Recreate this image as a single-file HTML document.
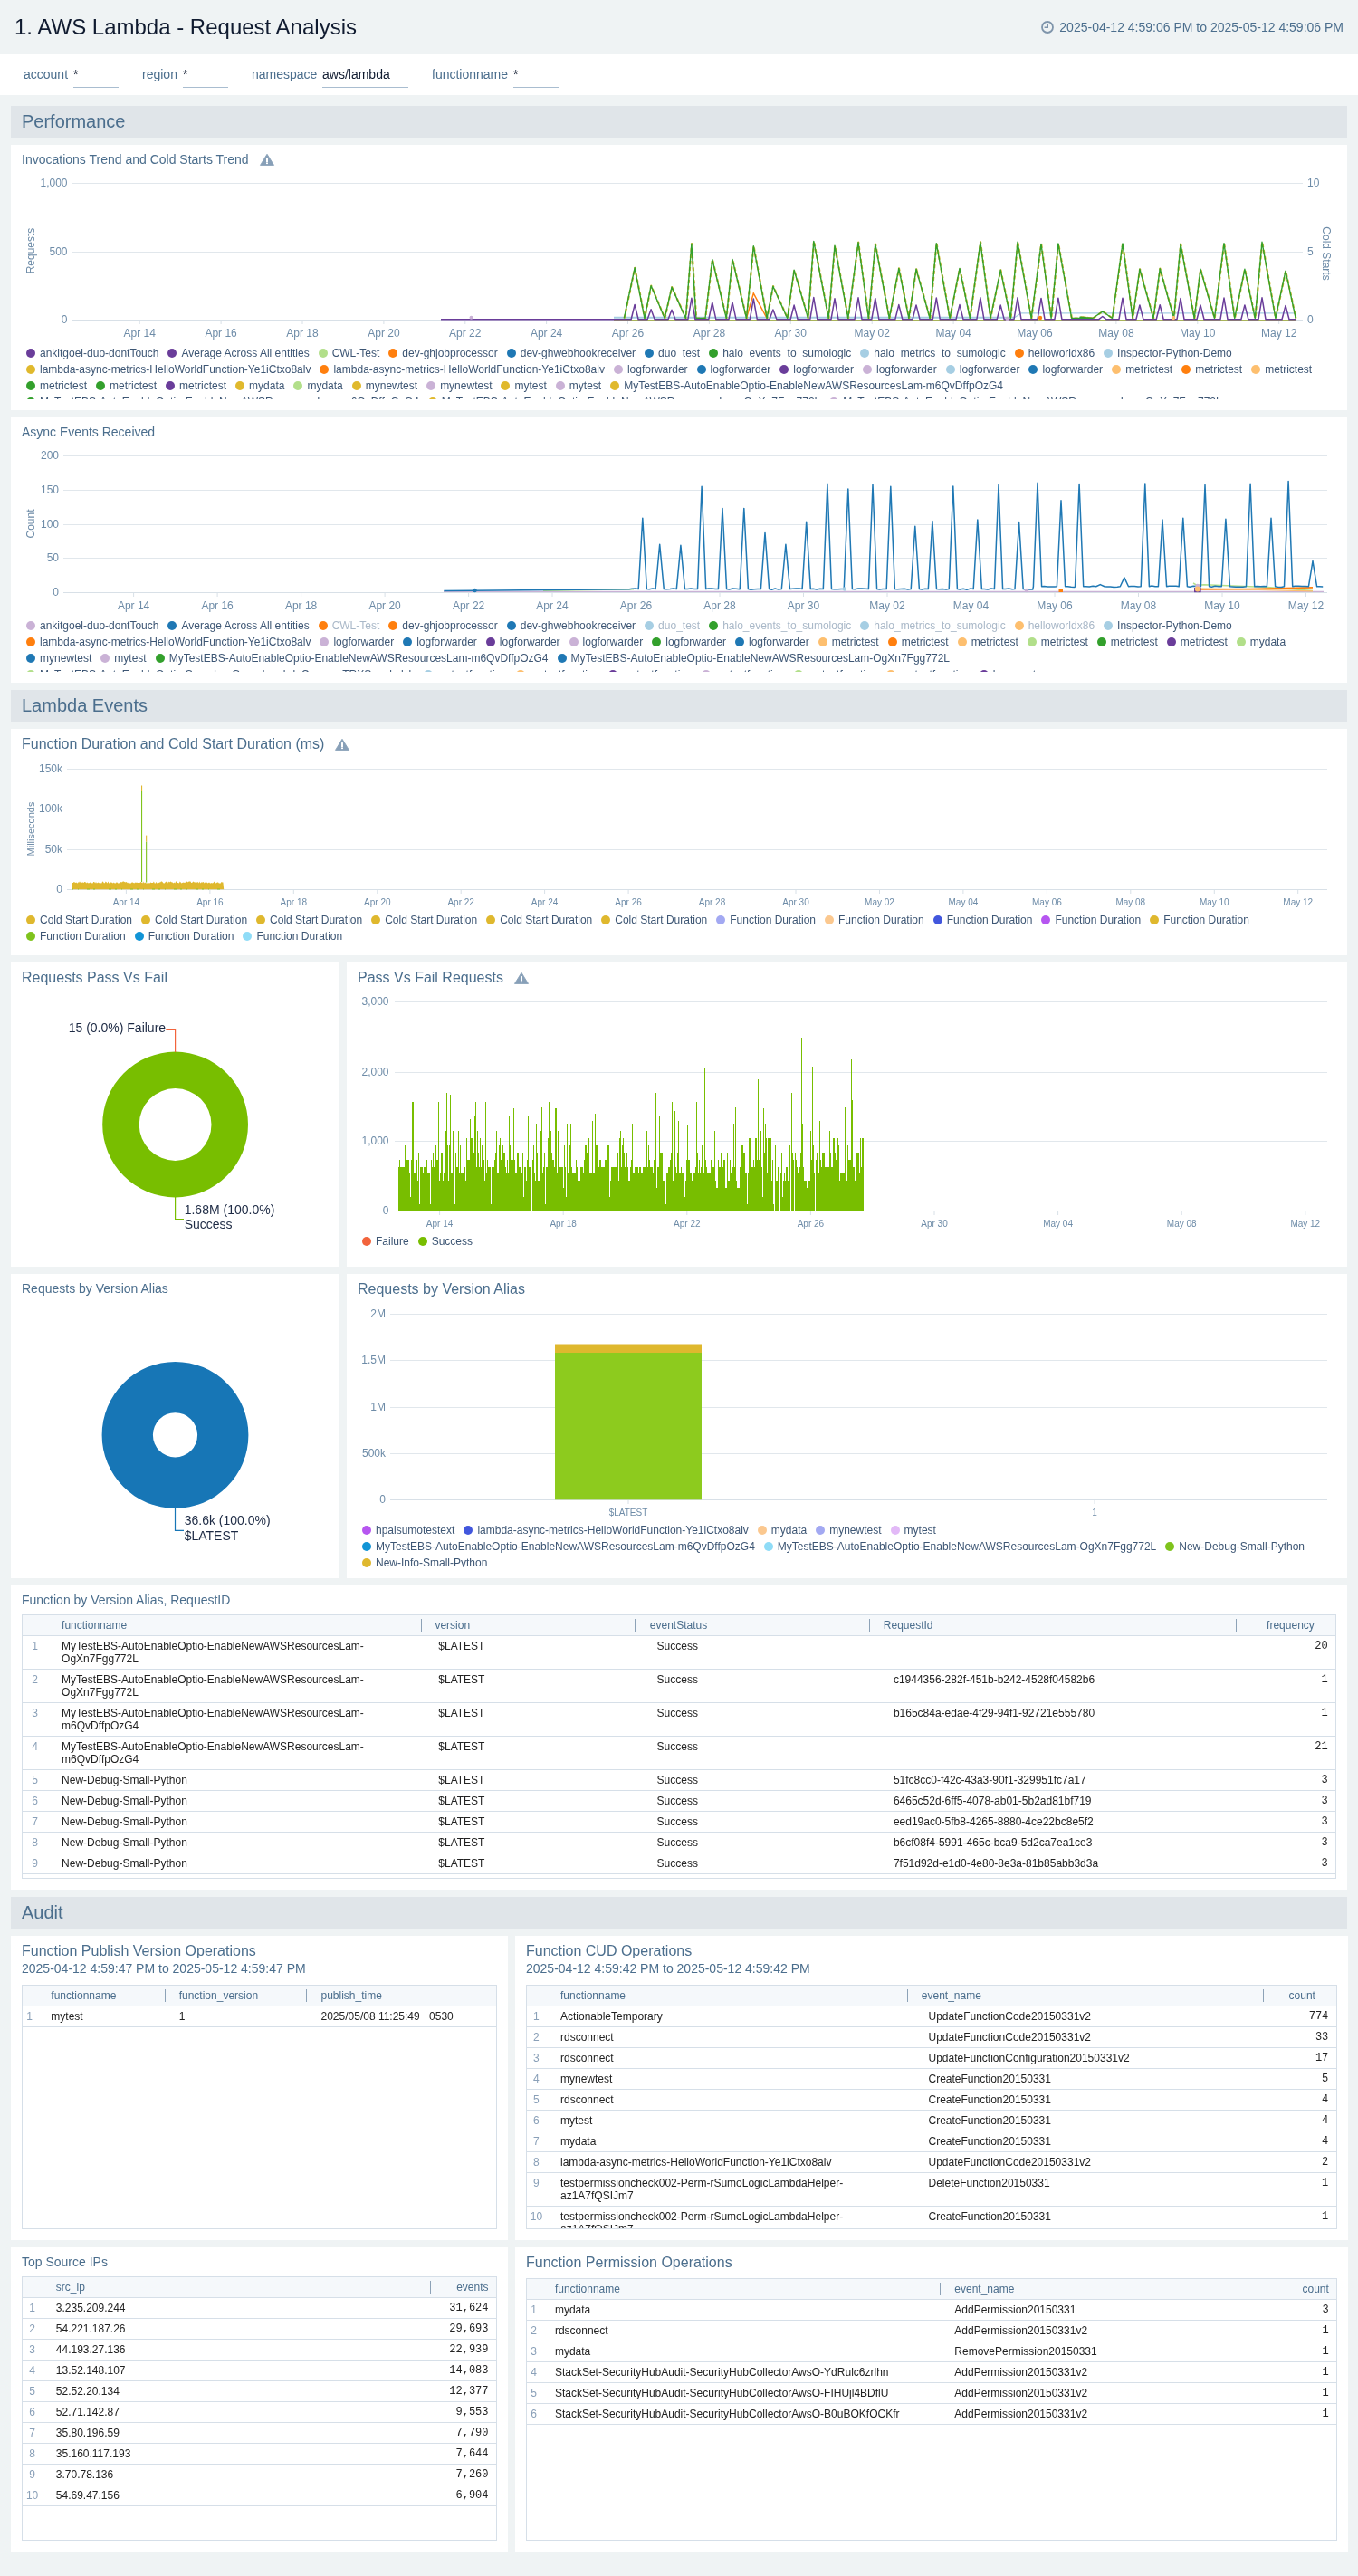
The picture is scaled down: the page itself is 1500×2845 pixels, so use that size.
<!DOCTYPE html>
<html><head><meta charset="utf-8"><title>1. AWS Lambda - Request Analysis</title>
<style>
*{box-sizing:border-box}
html,body{margin:0;padding:0}
body{width:1500px;height:2845px;background:#eff3f4;font-family:"Liberation Sans",Arial,sans-serif;position:relative;overflow:hidden;color:#1d2a3a}
.abs{position:absolute}
.hdr{position:absolute;left:0;top:0;width:1500px;height:60px;background:#eff3f4}
.hdr h1{position:absolute;left:16px;top:16px;margin:0;font-size:24px;line-height:28px;font-weight:400;color:#101b30;white-space:nowrap}
.hdr .rng{position:absolute;right:16px;top:22px;font-size:14px;line-height:16px;color:#4b6e8d;white-space:nowrap}
.flt{position:absolute;left:0;top:60px;width:1500px;height:45px;background:#fff}
.flt .l{position:absolute;top:14px;font-size:14px;line-height:16px;color:#4b6e8d;white-space:nowrap}
.flt .v{position:absolute;top:14px;height:23px;border-bottom:1px solid #a9bdd0;font-size:14px;line-height:16px;color:#101b30;white-space:nowrap}
.sec{position:absolute;left:12px;width:1476px;height:35px;background:#e0e5e9;color:#4b6e8d;font-size:20px;line-height:35px;padding-left:12px;white-space:nowrap}
.pn{position:absolute;background:#fff;overflow:hidden}
.pt{position:absolute;left:12px;white-space:nowrap;color:#4b6e8d}
.pt14{font-size:14px;line-height:16px;top:8px}
.pt16{font-size:16px;line-height:18px;top:8px}
.lg{position:absolute;overflow:hidden;font-size:12px;line-height:18px;color:#3d5674}
.lg .r{white-space:nowrap;height:18px}
.lg .i{display:inline-block;margin-right:10px}
.lg .i.f{color:#a9b8c8}
.lg .d{display:inline-block;width:10px;height:10px;border-radius:50%;margin-right:5px;vertical-align:-1px}
svg{position:absolute;left:0;top:0;overflow:visible}
svg text{font-family:"Liberation Sans",Arial,sans-serif}
table{border-collapse:collapse}
</style></head><body>
<div id="root" style="position:absolute;left:0;top:0;width:1500px;height:2845px;will-change:transform">
<div class="hdr"><h1>1. AWS Lambda - Request Analysis</h1><svg width="14" height="14" viewBox="0 0 14 14" style="position:absolute;left:1150px;top:23px"><circle cx="7" cy="7" r="6" fill="none" stroke="#7f95ab" stroke-width="1.8"/><path d="M7.3 3.2 V7.3 H3.6" fill="none" stroke="#7f95ab" stroke-width="1.4"/></svg><div class="rng">2025-04-12 4:59:06 PM to 2025-05-12 4:59:06 PM</div></div>
<div class="flt"><div class="l" style="left:26px">account</div><div class="v" style="left:81px;width:50px">*</div><div class="l" style="left:157px">region</div><div class="v" style="left:202px;width:50px">*</div><div class="l" style="left:278px">namespace</div><div class="v" style="left:356px;width:95px">aws/lambda</div><div class="l" style="left:477px">functionname</div><div class="v" style="left:567px;width:50px">*</div></div>
<div class="sec" style="top:117px">Performance</div>
<div class="sec" style="top:762px">Lambda Events</div>
<div class="sec" style="top:2095px">Audit</div>
<div class="pn" style="left:12px;top:160px;width:1476px;height:293px"><div class="pt pt14">Invocations Trend and Cold Starts Trend</div><svg width="16" height="14" viewBox="0 0 16 14" style="position:absolute;left:275px;top:9px"><path d="M8 1.3 L15.5 13.4 L0.5 13.4 Z" fill="#88a0b8" stroke="#88a0b8" stroke-width="0.9" stroke-linejoin="round"/><rect x="7" y="5.1" width="2" height="4.9" fill="#fff"/><rect x="7" y="10.5" width="2" height="1.6" fill="#fff"/></svg><svg width="1476" height="293" viewBox="0 0 1476 293"><path d="M68 42.5 H1427" stroke="#e1e7ec" stroke-width="1" fill="none" shape-rendering="crispEdges"/><text x="62.5" y="45.8" font-size="12" fill="#6e8ca8" text-anchor="end" >1,000</text><text x="1432" y="45.8" font-size="12" fill="#6e8ca8" text-anchor="start" >10</text><path d="M68 118.5 H1427" stroke="#e1e7ec" stroke-width="1" fill="none" shape-rendering="crispEdges"/><text x="62.5" y="121.8" font-size="12" fill="#6e8ca8" text-anchor="end" >500</text><text x="1432" y="121.8" font-size="12" fill="#6e8ca8" text-anchor="start" >5</text><path d="M68 193.5 H1427" stroke="#d8e0e7" stroke-width="1" fill="none" shape-rendering="crispEdges"/><text x="62.5" y="196.8" font-size="12" fill="#6e8ca8" text-anchor="end" >0</text><text x="1432" y="196.8" font-size="12" fill="#6e8ca8" text-anchor="start" >0</text><path d="M142.2 194 v4" stroke="#d8e0e7" stroke-width="1" fill="none"/><path d="M232.1 194 v4" stroke="#d8e0e7" stroke-width="1" fill="none"/><path d="M322.0 194 v4" stroke="#d8e0e7" stroke-width="1" fill="none"/><path d="M411.9 194 v4" stroke="#d8e0e7" stroke-width="1" fill="none"/><path d="M501.8 194 v4" stroke="#d8e0e7" stroke-width="1" fill="none"/><path d="M591.6 194 v4" stroke="#d8e0e7" stroke-width="1" fill="none"/><path d="M681.5 194 v4" stroke="#d8e0e7" stroke-width="1" fill="none"/><path d="M771.4 194 v4" stroke="#d8e0e7" stroke-width="1" fill="none"/><path d="M861.3 194 v4" stroke="#d8e0e7" stroke-width="1" fill="none"/><path d="M951.2 194 v4" stroke="#d8e0e7" stroke-width="1" fill="none"/><path d="M1041.1 194 v4" stroke="#d8e0e7" stroke-width="1" fill="none"/><path d="M1131.0 194 v4" stroke="#d8e0e7" stroke-width="1" fill="none"/><path d="M1220.9 194 v4" stroke="#d8e0e7" stroke-width="1" fill="none"/><path d="M1310.8 194 v4" stroke="#d8e0e7" stroke-width="1" fill="none"/><path d="M1400.7 194 v4" stroke="#d8e0e7" stroke-width="1" fill="none"/><text x="142.2" y="212.3" font-size="12" fill="#6e8ca8" text-anchor="middle" >Apr 14</text><text x="232.1" y="212.3" font-size="12" fill="#6e8ca8" text-anchor="middle" >Apr 16</text><text x="322.0" y="212.3" font-size="12" fill="#6e8ca8" text-anchor="middle" >Apr 18</text><text x="411.9" y="212.3" font-size="12" fill="#6e8ca8" text-anchor="middle" >Apr 20</text><text x="501.8" y="212.3" font-size="12" fill="#6e8ca8" text-anchor="middle" >Apr 22</text><text x="591.6" y="212.3" font-size="12" fill="#6e8ca8" text-anchor="middle" >Apr 24</text><text x="681.5" y="212.3" font-size="12" fill="#6e8ca8" text-anchor="middle" >Apr 26</text><text x="771.4" y="212.3" font-size="12" fill="#6e8ca8" text-anchor="middle" >Apr 28</text><text x="861.3" y="212.3" font-size="12" fill="#6e8ca8" text-anchor="middle" >Apr 30</text><text x="951.2" y="212.3" font-size="12" fill="#6e8ca8" text-anchor="middle" >May 02</text><text x="1041.1" y="212.3" font-size="12" fill="#6e8ca8" text-anchor="middle" >May 04</text><text x="1131.0" y="212.3" font-size="12" fill="#6e8ca8" text-anchor="middle" >May 06</text><text x="1220.9" y="212.3" font-size="12" fill="#6e8ca8" text-anchor="middle" >May 08</text><text x="1310.8" y="212.3" font-size="12" fill="#6e8ca8" text-anchor="middle" >May 10</text><text x="1400.7" y="212.3" font-size="12" fill="#6e8ca8" text-anchor="middle" >May 12</text><text transform="translate(26,117) rotate(-90)" font-size="12" fill="#6e8ca8" text-anchor="middle">Requests</text><text transform="translate(1449,120) rotate(90)" font-size="12" fill="#6e8ca8" text-anchor="middle">Cold Starts</text><polyline points="1109,190.6 1116,185.8 1419,185.8" fill="none" stroke="#a6cee3" stroke-width="1.2"/><polyline points="666,190.8 1108,190.8" fill="none" stroke="#a6cee3" stroke-width="2"/><polyline points="666,193.7 1419,193.7" fill="none" stroke="#a9b45a" stroke-width="1.2"/><polyline points="812.5,191.5 820.3,163.9 835.1,191.5" fill="none" stroke="#ff7f0e" stroke-width="1.5"/><polyline points="677.6,191.5 689.3,135.8 700.2,191.5 707.3,155.6 722.4,191.5 730.2,157.1 745.6,191.5 752.1,109.2 757.1,191.5 767.2,191.5 775.0,126.5 790.5,191.5 797.2,126.5 812.7,191.5 820.5,111.7 835.3,191.5 842.1,156.2 857.9,191.5 865.3,138.3 880.8,191.5 887.0,106.4 903.4,191.5 910.2,111.3 925.0,191.5 936.2,107.6 947.6,191.5 955.0,109.5 970.5,191.5 981.0,136.4 992.1,191.5 1000.2,137.3 1015.3,191.5 1022.5,108.6 1037.3,191.5 1048.2,136.4 1059.6,191.5 1071.1,107.3 1082.2,191.5 1093.4,138.3 1104.5,191.5 1112.2,107.3 1127.4,191.5 1138.2,109.5 1149.3,191.5 1157.1,108.9 1171.9,191.5 1195.2,191.5 1181.2,190.2 1195.2,191.5 1206.0,184 1216.8,191.5 1228.2,108.9 1239.3,191.5 1247.1,137.3 1262.2,191.5 1269.4,136.7 1284.8,191.5 1292.2,109.5 1307.4,191.5 1314.2,137.3 1329.7,191.5 1340.2,108.6 1351.9,191.5 1363.1,137.3 1374.5,191.5 1382.2,107.3 1397.1,191.5 1408.2,139.2 1419.4,191.5" fill="none" stroke="#d2b830" stroke-width="2.2" stroke-dasharray="4 3" stroke-linejoin="round"/><polyline points="677.4,191.5 689.1,135.8 700,191.5 707.1,155.6 722.2,191.5 730,157.1 745.4,191.5 751.9,109.2 756.9,191.5 767,191.5 774.8,126.5 790.3,191.5 797,126.5 812.5,191.5 820.3,111.7 835.1,191.5 841.9,156.2 857.7,191.5 865.1,138.3 880.6,191.5 886.8,106.4 903.2,191.5 910,111.3 924.8,191.5 936,107.6 947.4,191.5 954.8,109.5 970.3,191.5 980.8,136.4 991.9,191.5 1000,137.3 1015.1,191.5 1022.3,108.6 1037.1,191.5 1048,136.4 1059.4,191.5 1070.9,107.3 1082,191.5 1093.2,138.3 1104.3,191.5 1112,107.3 1127.2,191.5 1138,109.5 1149.1,191.5 1156.9,108.9 1171.7,191.5 1195,191.5 1181,190.2 1195,191.5 1205.8,184 1216.6,191.5 1228,108.9 1239.1,191.5 1246.9,137.3 1262,191.5 1269.2,136.7 1284.6,191.5 1292,109.5 1307.2,191.5 1314,137.3 1329.5,191.5 1340,108.6 1351.7,191.5 1362.9,137.3 1374.3,191.5 1382,107.3 1396.9,191.5 1408,139.2 1419.2,191.5" fill="none" stroke="#33a02c" stroke-width="1.4" stroke-linejoin="round"/><polyline points="475,192.7 685.1,192.7 689.1,176.5 693.1,192.7 703.1,192.7 707.1,181.8 711.1,192.7 726.0,192.7 730,182.2 734.0,192.7 747.9,192.7 751.9,169.3 755.9,192.7 770.8,192.7 774.8,173.9 778.8,192.7 793.0,192.7 797,173.9 801.0,192.7 816.3,192.7 820.3,170.0 824.3,192.7 837.9,192.7 841.9,182.0 845.9,192.7 861.1,192.7 865.1,177.1 869.1,192.7 882.8,192.7 886.8,168.5 890.8,192.7 906.0,192.7 910,169.8 914.0,192.7 932.0,192.7 936,168.8 940.0,192.7 950.8,192.7 954.8,169.4 958.8,192.7 976.8,192.7 980.8,176.6 984.8,192.7 996.0,192.7 1000,176.9 1004.0,192.7 1018.3,192.7 1022.3,169.1 1026.3,192.7 1044.0,192.7 1048,176.6 1052.0,192.7 1066.9,192.7 1070.9,168.8 1074.9,192.7 1089.2,192.7 1093.2,177.1 1097.2,192.7 1108.0,192.7 1112,168.8 1116.0,192.7 1134.0,192.7 1138,169.4 1142.0,192.7 1152.9,192.7 1156.9,169.2 1160.9,192.7 1201.8,192.7 1205.8,189.5 1209.8,192.7 1224.0,192.7 1228,169.2 1232.0,192.7 1242.9,192.7 1246.9,176.9 1250.9,192.7 1265.2,192.7 1269.2,176.7 1273.2,192.7 1288.0,192.7 1292,169.4 1296.0,192.7 1310.0,192.7 1314,176.9 1318.0,192.7 1336.0,192.7 1340,169.1 1344.0,192.7 1358.9,192.7 1362.9,176.9 1366.9,192.7 1378.0,192.7 1382,168.8 1386.0,192.7 1404.0,192.7 1408,177.4 1412.0,192.7 1419.2,192.7" fill="none" stroke="#6a3d9a" stroke-width="1.5" stroke-linejoin="round"/><circle cx="1137" cy="191" r="2.2" fill="#ff7f0e"/><circle cx="1284" cy="191" r="2.2" fill="#fdbf6f"/><circle cx="508.5" cy="190.8" r="2" fill="#cab2d6"/><circle cx="1100.7" cy="192" r="2.2" fill="#cab2d6"/></svg><div class="lg" style="left:17px;top:221px;width:1440px;height:60px"><div class="r"><span class="i"><span class="d" style="background:#6a3d9a"></span>ankitgoel-duo-dontTouch</span><span class="i"><span class="d" style="background:#6a3d9a"></span>Average Across All entities</span><span class="i"><span class="d" style="background:#b2df8a"></span>CWL-Test</span><span class="i"><span class="d" style="background:#ff7f0e"></span>dev-ghjobprocessor</span><span class="i"><span class="d" style="background:#1f78b4"></span>dev-ghwebhookreceiver</span><span class="i"><span class="d" style="background:#1f78b4"></span>duo_test</span><span class="i"><span class="d" style="background:#33a02c"></span>halo_events_to_sumologic</span><span class="i"><span class="d" style="background:#a6cee3"></span>halo_metrics_to_sumologic</span><span class="i"><span class="d" style="background:#ff7f0e"></span>helloworldx86</span><span class="i"><span class="d" style="background:#a6cee3"></span>Inspector-Python-Demo</span></div><div class="r"><span class="i"><span class="d" style="background:#e0b92d"></span>lambda-async-metrics-HelloWorldFunction-Ye1iCtxo8alv</span><span class="i"><span class="d" style="background:#ff7f0e"></span>lambda-async-metrics-HelloWorldFunction-Ye1iCtxo8alv</span><span class="i"><span class="d" style="background:#cab2d6"></span>logforwarder</span><span class="i"><span class="d" style="background:#1f78b4"></span>logforwarder</span><span class="i"><span class="d" style="background:#6a3d9a"></span>logforwarder</span><span class="i"><span class="d" style="background:#cab2d6"></span>logforwarder</span><span class="i"><span class="d" style="background:#a6cee3"></span>logforwarder</span><span class="i"><span class="d" style="background:#1f78b4"></span>logforwarder</span><span class="i"><span class="d" style="background:#fdbf6f"></span>metrictest</span><span class="i"><span class="d" style="background:#ff7f0e"></span>metrictest</span><span class="i"><span class="d" style="background:#fdbf6f"></span>metrictest</span></div><div class="r"><span class="i"><span class="d" style="background:#33a02c"></span>metrictest</span><span class="i"><span class="d" style="background:#33a02c"></span>metrictest</span><span class="i"><span class="d" style="background:#6a3d9a"></span>metrictest</span><span class="i"><span class="d" style="background:#e0b92d"></span>mydata</span><span class="i"><span class="d" style="background:#b2df8a"></span>mydata</span><span class="i"><span class="d" style="background:#e0b92d"></span>mynewtest</span><span class="i"><span class="d" style="background:#cab2d6"></span>mynewtest</span><span class="i"><span class="d" style="background:#e0b92d"></span>mytest</span><span class="i"><span class="d" style="background:#cab2d6"></span>mytest</span><span class="i"><span class="d" style="background:#e0b92d"></span>MyTestEBS-AutoEnableOptio-EnableNewAWSResourcesLam-m6QvDffpOzG4</span></div><div class="r"><span class="i"><span class="d" style="background:#33a02c"></span>MyTestEBS-AutoEnableOptio-EnableNewAWSResourcesLam-m6QvDffpOzG4</span><span class="i"><span class="d" style="background:#e0b92d"></span>MyTestEBS-AutoEnableOptio-EnableNewAWSResourcesLam-OgXn7Fgg772L</span><span class="i"><span class="d" style="background:#cab2d6"></span>MyTestEBS-AutoEnableOptio-EnableNewAWSResourcesLam-OgXn7Fgg772L</span></div></div></div>
<div class="pn" style="left:12px;top:461px;width:1476px;height:293px"><div class="pt pt14">Async Events Received</div><svg width="1476" height="293" viewBox="0 0 1476 293"><path d="M58 42.5 H1454" stroke="#e1e7ec" stroke-width="1" fill="none" shape-rendering="crispEdges"/><text x="53" y="45.9" font-size="12" fill="#6e8ca8" text-anchor="end" >200</text><path d="M58 80.5 H1454" stroke="#e1e7ec" stroke-width="1" fill="none" shape-rendering="crispEdges"/><text x="53" y="83.9" font-size="12" fill="#6e8ca8" text-anchor="end" >150</text><path d="M58 118.5 H1454" stroke="#e1e7ec" stroke-width="1" fill="none" shape-rendering="crispEdges"/><text x="53" y="121.9" font-size="12" fill="#6e8ca8" text-anchor="end" >100</text><path d="M58 155.5 H1454" stroke="#e1e7ec" stroke-width="1" fill="none" shape-rendering="crispEdges"/><text x="53" y="158.9" font-size="12" fill="#6e8ca8" text-anchor="end" >50</text><path d="M58 193.5 H1454" stroke="#d8e0e7" stroke-width="1" fill="none" shape-rendering="crispEdges"/><text x="53" y="196.9" font-size="12" fill="#6e8ca8" text-anchor="end" >0</text><path d="M135.6 194 v4" stroke="#d8e0e7" stroke-width="1" fill="none"/><path d="M228.1 194 v4" stroke="#d8e0e7" stroke-width="1" fill="none"/><path d="M320.6 194 v4" stroke="#d8e0e7" stroke-width="1" fill="none"/><path d="M413.1 194 v4" stroke="#d8e0e7" stroke-width="1" fill="none"/><path d="M505.6 194 v4" stroke="#d8e0e7" stroke-width="1" fill="none"/><path d="M598.0 194 v4" stroke="#d8e0e7" stroke-width="1" fill="none"/><path d="M690.5 194 v4" stroke="#d8e0e7" stroke-width="1" fill="none"/><path d="M783.0 194 v4" stroke="#d8e0e7" stroke-width="1" fill="none"/><path d="M875.5 194 v4" stroke="#d8e0e7" stroke-width="1" fill="none"/><path d="M968.0 194 v4" stroke="#d8e0e7" stroke-width="1" fill="none"/><path d="M1060.5 194 v4" stroke="#d8e0e7" stroke-width="1" fill="none"/><path d="M1153.0 194 v4" stroke="#d8e0e7" stroke-width="1" fill="none"/><path d="M1245.5 194 v4" stroke="#d8e0e7" stroke-width="1" fill="none"/><path d="M1338.0 194 v4" stroke="#d8e0e7" stroke-width="1" fill="none"/><path d="M1430.5 194 v4" stroke="#d8e0e7" stroke-width="1" fill="none"/><text x="135.6" y="212.2" font-size="12" fill="#6e8ca8" text-anchor="middle" >Apr 14</text><text x="228.1" y="212.2" font-size="12" fill="#6e8ca8" text-anchor="middle" >Apr 16</text><text x="320.6" y="212.2" font-size="12" fill="#6e8ca8" text-anchor="middle" >Apr 18</text><text x="413.1" y="212.2" font-size="12" fill="#6e8ca8" text-anchor="middle" >Apr 20</text><text x="505.6" y="212.2" font-size="12" fill="#6e8ca8" text-anchor="middle" >Apr 22</text><text x="598.0" y="212.2" font-size="12" fill="#6e8ca8" text-anchor="middle" >Apr 24</text><text x="690.5" y="212.2" font-size="12" fill="#6e8ca8" text-anchor="middle" >Apr 26</text><text x="783.0" y="212.2" font-size="12" fill="#6e8ca8" text-anchor="middle" >Apr 28</text><text x="875.5" y="212.2" font-size="12" fill="#6e8ca8" text-anchor="middle" >Apr 30</text><text x="968.0" y="212.2" font-size="12" fill="#6e8ca8" text-anchor="middle" >May 02</text><text x="1060.5" y="212.2" font-size="12" fill="#6e8ca8" text-anchor="middle" >May 04</text><text x="1153.0" y="212.2" font-size="12" fill="#6e8ca8" text-anchor="middle" >May 06</text><text x="1245.5" y="212.2" font-size="12" fill="#6e8ca8" text-anchor="middle" >May 08</text><text x="1338.0" y="212.2" font-size="12" fill="#6e8ca8" text-anchor="middle" >May 10</text><text x="1430.5" y="212.2" font-size="12" fill="#6e8ca8" text-anchor="middle" >May 12</text><text transform="translate(26,117.5) rotate(-90)" font-size="12" fill="#6e8ca8" text-anchor="middle">Count</text><polyline points="478,192.4 1450,192.4" fill="none" stroke="#cab2d6" stroke-width="1.2"/><polyline points="588,191.3 688,189.8" fill="none" stroke="#b2df8a" stroke-width="1.5"/><polyline points="1306,183 1310,185.3 1318,184.8 1388,187.4 1438,191.4" fill="none" stroke="#b2df8a" stroke-width="1.5"/><polyline points="1314,189.9 1368,189.6 1438,187.9" fill="none" stroke="#ff7f0e" stroke-width="1.8"/><polyline points="1310,189 1368,190.2 1438,191.8" fill="none" stroke="#fdbf6f" stroke-width="1.3"/><polyline points="478.3,191.6 683,189.7 686.0,189.2 689.9,189.1 693.2,189.6 697.8,111.3 702.4,189.6 705.2,189.8 709.0,189.0 712.1,189.6 716.7,140.3 721.3,189.6 724.1,189.7 728.0,189.4 731.8,189.0 735.3,189.6 739.9,141.3 744.5,189.6 747.3,189.6 751.1,189.0 755.0,189.5 758.5,189.6 763.1,76.3 767.7,189.6 770.5,189.0 774.4,189.0 778.2,189.5 781.4,189.6 786,100.4 790.6,189.6 793.4,190.1 797.2,189.1 801.1,189.2 805.0,189.8 805.2,189.6 809.8,100.4 814.4,189.6 817.2,190.2 821.0,189.7 824.9,189.5 828.4,189.6 833,127.4 837.6,189.6 840.4,190.3 844.2,189.0 848.1,190.1 851.3,189.6 855.9,140.3 860.5,189.6 863.3,189.3 867.1,189.1 871.0,189.1 874.1,189.6 878.7,115.3 883.3,189.6 886.1,189.3 890.0,190.0 893.8,189.2 897.3,189.6 901.9,73.2 906.5,189.6 909.3,189.7 913.1,189.8 917.0,189.4 920.2,189.6 924.8,79.1 929.4,189.6 932.2,189.7 936.0,189.0 939.9,189.0 943.8,189.2 947.4,189.6 952,74.2 956.6,189.6 959.4,189.9 963.2,189.5 967.1,189.3 967.2,189.6 971.8,76.3 976.4,189.6 979.2,189.7 983.0,189.5 986.9,189.3 990.8,190.0 994.2,189.6 998.8,120.2 1003.4,189.6 1006.2,189.9 1010.0,189.2 1013.3,189.6 1017.9,114.4 1022.5,189.6 1025.3,189.7 1029.2,189.6 1033.0,190.1 1036.2,189.6 1040.8,76 1045.4,189.6 1048.2,189.9 1052.0,189.3 1055.9,190.3 1059.7,189.1 1063.2,189.6 1067.8,113.1 1072.4,189.6 1075.2,189.5 1079.0,190.0 1082.9,189.1 1086.4,189.6 1091,74.5 1095.6,189.6 1098.4,189.6 1102.2,189.0 1106.1,189.8 1109.0,189.6 1113.6,115.6 1118.2,189.6 1121.0,190.0 1124.8,189.7 1128.7,190.1 1129.4,186.8 1134,72.3 1138.6,186.8 1141.4,186.5 1145.2,187.1 1149.1,186.9 1152.9,186.9 1155.4,186.8 1160,91.8 1164.6,186.8 1167.4,186.7 1171.2,187.3 1175.1,187.4 1175.5,186.8 1180.1,73.5 1184.7,186.8 1187.5,186.8 1191.3,187.0 1195.2,186.2 1198.7,186.8 1203.3,184.6 1207.9,186.8 1210.7,187.1 1214.5,187.0 1218.4,187.5 1222.2,187.3 1225.3,186.8 1229.9,176.9 1234.5,186.8 1237.3,186.5 1241.2,186.6 1245.0,187.0 1248.2,186.8 1252.8,72.9 1257.4,186.8 1260.2,186.1 1264.0,186.7 1267.4,186.8 1272,113.1 1276.6,186.8 1279.4,186.3 1283.2,186.3 1287.1,186.2 1290.2,186.8 1294.8,111.3 1299.4,186.8 1302.2,187.2 1306.0,186.3 1309.9,186.4 1313.7,186.6 1314.4,186.8 1319,74.5 1323.6,186.8 1326.4,187.3 1330.2,186.2 1334.1,186.7 1337.3,186.8 1341.9,112.2 1346.5,186.8 1349.3,186.9 1353.2,187.3 1357.0,187.2 1360.8,187.3 1364.5,186.8 1369.1,73.2 1373.7,186.8 1376.5,186.5 1380.3,186.7 1384.2,186.6 1387.4,186.8 1392,111.3 1396.6,186.8 1399.4,187.3 1403.2,187.4 1406.5,186.8 1411.1,70.4 1415.7,186.8 1418.5,186.3 1422.3,186.3 1426.2,186.4 1430.0,186.4 1433.4,186.8 1438,158.6 1442.6,186.8 1445.4,186.8 1449.2,186.9" fill="none" stroke="#1f78b4" stroke-width="1.5" stroke-linejoin="round"/><circle cx="512.5" cy="191" r="2.3" fill="#1f78b4"/><circle cx="921" cy="189.5" r="2.2" fill="#a6cee3"/><circle cx="1122" cy="191" r="2.3" fill="#cab2d6"/><rect x="1157.5" y="189" width="4.5" height="4" fill="#ff7f0e"/><rect x="1307" y="188" width="7.6" height="5.2" fill="#6a3d9a"/><circle cx="1310.8" cy="186.20000000000005" r="2.4" fill="#cab2d6"/><circle cx="1310.8" cy="189.60000000000002" r="3" fill="#fdbf6f"/></svg><div class="lg" style="left:17px;top:221px;width:1440px;height:60px"><div class="r"><span class="i"><span class="d" style="background:#cab2d6"></span>ankitgoel-duo-dontTouch</span><span class="i"><span class="d" style="background:#1f78b4"></span>Average Across All entities</span><span class="i f"><span class="d" style="background:#ff7f0e"></span>CWL-Test</span><span class="i"><span class="d" style="background:#ff7f0e"></span>dev-ghjobprocessor</span><span class="i"><span class="d" style="background:#1f78b4"></span>dev-ghwebhookreceiver</span><span class="i f"><span class="d" style="background:#a6cee3"></span>duo_test</span><span class="i f"><span class="d" style="background:#33a02c"></span>halo_events_to_sumologic</span><span class="i f"><span class="d" style="background:#a6cee3"></span>halo_metrics_to_sumologic</span><span class="i f"><span class="d" style="background:#fdbf6f"></span>helloworldx86</span><span class="i"><span class="d" style="background:#a6cee3"></span>Inspector-Python-Demo</span></div><div class="r"><span class="i"><span class="d" style="background:#ff7f0e"></span>lambda-async-metrics-HelloWorldFunction-Ye1iCtxo8alv</span><span class="i"><span class="d" style="background:#cab2d6"></span>logforwarder</span><span class="i"><span class="d" style="background:#1f78b4"></span>logforwarder</span><span class="i"><span class="d" style="background:#6a3d9a"></span>logforwarder</span><span class="i"><span class="d" style="background:#cab2d6"></span>logforwarder</span><span class="i"><span class="d" style="background:#33a02c"></span>logforwarder</span><span class="i"><span class="d" style="background:#1f78b4"></span>logforwarder</span><span class="i"><span class="d" style="background:#fdbf6f"></span>metrictest</span><span class="i"><span class="d" style="background:#ff7f0e"></span>metrictest</span><span class="i"><span class="d" style="background:#fdbf6f"></span>metrictest</span><span class="i"><span class="d" style="background:#b2df8a"></span>metrictest</span><span class="i"><span class="d" style="background:#33a02c"></span>metrictest</span><span class="i"><span class="d" style="background:#6a3d9a"></span>metrictest</span><span class="i"><span class="d" style="background:#b2df8a"></span>mydata</span></div><div class="r"><span class="i"><span class="d" style="background:#1f78b4"></span>mynewtest</span><span class="i"><span class="d" style="background:#cab2d6"></span>mytest</span><span class="i"><span class="d" style="background:#33a02c"></span>MyTestEBS-AutoEnableOptio-EnableNewAWSResourcesLam-m6QvDffpOzG4</span><span class="i"><span class="d" style="background:#1f78b4"></span>MyTestEBS-AutoEnableOptio-EnableNewAWSResourcesLam-OgXn7Fgg772L</span></div><div class="r"><span class="i"><span class="d" style="background:#b2df8a"></span>MyTestEBS-AutoEnableOptio-SumoLogGroupLambdaConnec-TRXSoeqbxlxk</span><span class="i"><span class="d" style="background:#a6cee3"></span>mytestfunction</span><span class="i"><span class="d" style="background:#fdbf6f"></span>mytestfunction</span><span class="i"><span class="d" style="background:#6a3d9a"></span>mytestfunction</span><span class="i"><span class="d" style="background:#cab2d6"></span>mytestfunction</span><span class="i"><span class="d" style="background:#b2df8a"></span>mytestfunction</span><span class="i"><span class="d" style="background:#fdbf6f"></span>mytestfunction</span><span class="i"><span class="d" style="background:#6a3d9a"></span>logreport</span></div></div></div>
<div class="pn" style="left:12px;top:805px;width:1476px;height:250px"><div class="pt pt16">Function Duration and Cold Start Duration (ms)</div><svg width="16" height="14" viewBox="0 0 16 14" style="position:absolute;left:358px;top:10px"><path d="M8 1.3 L15.5 13.4 L0.5 13.4 Z" fill="#88a0b8" stroke="#88a0b8" stroke-width="0.9" stroke-linejoin="round"/><rect x="7" y="5.1" width="2" height="4.9" fill="#fff"/><rect x="7" y="10.5" width="2" height="1.6" fill="#fff"/></svg><svg width="1476" height="250" viewBox="0 0 1476 250"><path d="M62 44.5 H1454" stroke="#e1e7ec" stroke-width="1" fill="none" shape-rendering="crispEdges"/><text x="57" y="47.9" font-size="12" fill="#6e8ca8" text-anchor="end" >150k</text><path d="M62 88.5 H1454" stroke="#e1e7ec" stroke-width="1" fill="none" shape-rendering="crispEdges"/><text x="57" y="91.9" font-size="12" fill="#6e8ca8" text-anchor="end" >100k</text><path d="M62 133.5 H1454" stroke="#e1e7ec" stroke-width="1" fill="none" shape-rendering="crispEdges"/><text x="57" y="136.9" font-size="12" fill="#6e8ca8" text-anchor="end" >50k</text><path d="M62 177.5 H1454" stroke="#d8e0e7" stroke-width="1" fill="none" shape-rendering="crispEdges"/><text x="57" y="180.9" font-size="12" fill="#6e8ca8" text-anchor="end" >0</text><path d="M127.4 178 v4" stroke="#d8e0e7" stroke-width="1" fill="none"/><path d="M219.9 178 v4" stroke="#d8e0e7" stroke-width="1" fill="none"/><path d="M312.3 178 v4" stroke="#d8e0e7" stroke-width="1" fill="none"/><path d="M404.8 178 v4" stroke="#d8e0e7" stroke-width="1" fill="none"/><path d="M497.2 178 v4" stroke="#d8e0e7" stroke-width="1" fill="none"/><path d="M589.6 178 v4" stroke="#d8e0e7" stroke-width="1" fill="none"/><path d="M682.1 178 v4" stroke="#d8e0e7" stroke-width="1" fill="none"/><path d="M774.5 178 v4" stroke="#d8e0e7" stroke-width="1" fill="none"/><path d="M867.0 178 v4" stroke="#d8e0e7" stroke-width="1" fill="none"/><path d="M959.5 178 v4" stroke="#d8e0e7" stroke-width="1" fill="none"/><path d="M1051.9 178 v4" stroke="#d8e0e7" stroke-width="1" fill="none"/><path d="M1144.4 178 v4" stroke="#d8e0e7" stroke-width="1" fill="none"/><path d="M1236.8 178 v4" stroke="#d8e0e7" stroke-width="1" fill="none"/><path d="M1329.3 178 v4" stroke="#d8e0e7" stroke-width="1" fill="none"/><path d="M1421.7 178 v4" stroke="#d8e0e7" stroke-width="1" fill="none"/><text x="127.4" y="194.5" font-size="10" fill="#6e8ca8" text-anchor="middle" >Apr 14</text><text x="219.9" y="194.5" font-size="10" fill="#6e8ca8" text-anchor="middle" >Apr 16</text><text x="312.3" y="194.5" font-size="10" fill="#6e8ca8" text-anchor="middle" >Apr 18</text><text x="404.8" y="194.5" font-size="10" fill="#6e8ca8" text-anchor="middle" >Apr 20</text><text x="497.2" y="194.5" font-size="10" fill="#6e8ca8" text-anchor="middle" >Apr 22</text><text x="589.6" y="194.5" font-size="10" fill="#6e8ca8" text-anchor="middle" >Apr 24</text><text x="682.1" y="194.5" font-size="10" fill="#6e8ca8" text-anchor="middle" >Apr 26</text><text x="774.5" y="194.5" font-size="10" fill="#6e8ca8" text-anchor="middle" >Apr 28</text><text x="867.0" y="194.5" font-size="10" fill="#6e8ca8" text-anchor="middle" >Apr 30</text><text x="959.5" y="194.5" font-size="10" fill="#6e8ca8" text-anchor="middle" >May 02</text><text x="1051.9" y="194.5" font-size="10" fill="#6e8ca8" text-anchor="middle" >May 04</text><text x="1144.4" y="194.5" font-size="10" fill="#6e8ca8" text-anchor="middle" >May 06</text><text x="1236.8" y="194.5" font-size="10" fill="#6e8ca8" text-anchor="middle" >May 08</text><text x="1329.3" y="194.5" font-size="10" fill="#6e8ca8" text-anchor="middle" >May 10</text><text x="1421.7" y="194.5" font-size="10" fill="#6e8ca8" text-anchor="middle" >May 12</text><text transform="translate(26,110.5) rotate(-90)" font-size="11" fill="#6e8ca8" text-anchor="middle">Milliseconds</text><polygon points="67,177.3 67.0,169.0 67.9,170.0 68.8,170.0 69.7,169.0 70.6,169.6 71.5,170.0 72.4,169.6 73.3,170.4 74.2,170.0 75.1,168.4 76.0,170.0 76.9,168.4 77.8,170.6 78.7,169.6 79.6,169.6 80.5,170.0 81.4,169.0 82.3,169.0 83.2,170.4 84.1,169.6 85.0,170.0 85.9,170.6 86.8,170.0 87.7,169.6 88.6,169.6 89.5,170.4 90.4,170.6 91.3,169.0 92.2,169.0 93.1,170.4 94.0,169.0 94.9,170.6 95.8,170.0 96.7,169.6 97.6,170.4 98.5,168.4 99.4,170.4 100.3,170.6 101.2,168.4 102.1,169.0 103.0,170.6 103.9,170.0 104.8,168.4 105.7,169.6 106.6,170.6 107.5,168.4 108.4,170.6 109.3,170.6 110.2,169.6 111.1,169.6 112.0,170.0 112.9,170.4 113.8,169.6 114.7,170.4 115.6,170.6 116.5,169.6 117.4,169.6 118.3,170.4 119.2,170.6 120.1,170.0 121.0,169.6 121.9,169.0 122.8,169.6 123.7,168.4 124.6,168.4 125.5,169.0 126.4,169.6 127.3,169.0 128.2,169.6 129.1,170.4 130.0,169.6 130.9,170.6 131.8,170.4 132.7,170.6 133.6,169.6 134.5,169.6 135.4,170.0 136.3,170.6 137.2,169.6 138.1,170.0 139.0,169.6 139.9,170.0 140.8,170.0 141.7,169.6 142.6,170.0 143.5,169.0 144.4,169.6 145.3,170.4 146.2,168.4 147.1,170.6 148.0,169.6 148.9,170.0 149.8,170.4 150.7,170.4 151.6,169.0 152.5,170.4 153.4,170.6 154.3,169.6 155.2,170.0 156.1,170.0 157.0,170.0 157.9,168.4 158.8,170.4 159.7,170.4 160.6,169.0 161.5,170.4 162.4,170.6 163.3,170.0 164.2,169.6 165.1,169.6 166.0,168.4 166.9,168.4 167.8,169.6 168.7,170.6 169.6,170.4 170.5,169.6 171.4,168.4 172.3,169.6 173.2,170.6 174.1,168.4 175.0,169.6 175.9,169.0 176.8,168.4 177.7,169.6 178.6,169.6 179.5,170.6 180.4,169.6 181.3,170.6 182.2,168.4 183.1,168.4 184.0,170.0 184.9,170.0 185.8,170.6 186.7,168.4 187.6,169.6 188.5,170.4 189.4,170.0 190.3,169.6 191.2,170.0 192.1,169.6 193.0,170.0 193.9,169.0 194.8,168.4 195.7,169.6 196.6,168.4 197.5,168.4 198.4,168.4 199.3,170.0 200.2,170.0 201.1,168.4 202.0,169.0 202.9,169.6 203.8,169.6 204.7,170.0 205.6,169.6 206.5,169.0 207.4,170.4 208.3,168.4 209.2,170.6 210.1,169.6 211.0,169.6 211.9,169.6 212.8,169.0 213.7,170.6 214.6,169.6 215.5,169.6 216.4,169.6 217.3,170.6 218.2,170.0 219.1,169.6 220.0,170.4 220.9,170.6 221.8,170.0 222.7,170.4 223.6,170.0 224.5,168.4 225.4,170.0 226.3,170.6 227.2,170.0 228.1,169.6 229.0,169.6 229.9,170.4 230.8,170.4 231.7,170.4 232.6,169.0 233.5,169.6 234.4,169.6 235.2,177.3" fill="#dfb82e"/><path d="M67 177 H235" stroke="#7fc31c" stroke-width="0.8" stroke-dasharray="2 5 1 9 3 4" fill="none"/><rect x="144" y="69" width="1.1" height="100" fill="#7fc31c"/><rect x="144" y="62.5" width="1.1" height="6.5" fill="#dfb82e"/><rect x="149.1" y="124.60000000000002" width="1.1" height="45" fill="#7fc31c"/><rect x="149.1" y="117.60000000000002" width="1.1" height="7" fill="#dfb82e"/></svg><div class="lg" style="left:17px;top:202px;width:1440px;height:40px"><div class="r"><span class="i"><span class="d" style="background:#dfb82e"></span>Cold Start Duration</span><span class="i"><span class="d" style="background:#dfb82e"></span>Cold Start Duration</span><span class="i"><span class="d" style="background:#dfb82e"></span>Cold Start Duration</span><span class="i"><span class="d" style="background:#dfb82e"></span>Cold Start Duration</span><span class="i"><span class="d" style="background:#dfb82e"></span>Cold Start Duration</span><span class="i"><span class="d" style="background:#dfb82e"></span>Cold Start Duration</span><span class="i"><span class="d" style="background:#a3a9f2"></span>Function Duration</span><span class="i"><span class="d" style="background:#fbc88f"></span>Function Duration</span><span class="i"><span class="d" style="background:#4257dd"></span>Function Duration</span><span class="i"><span class="d" style="background:#b656f0"></span>Function Duration</span><span class="i"><span class="d" style="background:#dfb82e"></span>Function Duration</span></div><div class="r"><span class="i"><span class="d" style="background:#7fc31c"></span>Function Duration</span><span class="i"><span class="d" style="background:#1194d6"></span>Function Duration</span><span class="i"><span class="d" style="background:#8fdcf7"></span>Function Duration</span></div></div></div>
<div class="pn" style="left:12px;top:1063px;width:363px;height:336px"><div class="pt pt16">Requests Pass Vs Fail</div><svg width="363" height="336" viewBox="0 0 363 336"><path fill-rule="evenodd" fill="#78be00" d="M101.19999999999999 179 a80.4 80.4 0 1 0 160.8 0 a80.4 80.4 0 1 0 -160.8 0 Z M141.7 179 a39.9 39.9 0 1 0 79.8 0 a39.9 39.9 0 1 0 -79.8 0 Z"/><path d="M171.3 74.5 H181.6 V99" fill="none" stroke="#f2643c" stroke-width="1.2"/><path d="M181.6 259 V283.5 H191" fill="none" stroke="#78be00" stroke-width="1.2"/><text x="171.1" y="76.9" font-size="14" fill="#1d2a44" text-anchor="end" >15 (0.0%) Failure</text><text x="191.7" y="277.5" font-size="14" fill="#1d2a44" text-anchor="start" >1.68M (100.0%)</text><text x="191.7" y="294.3" font-size="14" fill="#1d2a44" text-anchor="start" >Success</text></svg></div>
<div class="pn" style="left:383px;top:1063px;width:1105px;height:336px"><div class="pt pt16">Pass Vs Fail Requests</div><svg width="16" height="14" viewBox="0 0 16 14" style="position:absolute;left:185px;top:10px"><path d="M8 1.3 L15.5 13.4 L0.5 13.4 Z" fill="#88a0b8" stroke="#88a0b8" stroke-width="0.9" stroke-linejoin="round"/><rect x="7" y="5.1" width="2" height="4.9" fill="#fff"/><rect x="7" y="10.5" width="2" height="1.6" fill="#fff"/></svg><svg width="1105" height="336" viewBox="0 0 1105 336"><path d="M53 43.5 H1083" stroke="#e1e7ec" stroke-width="1" fill="none" shape-rendering="crispEdges"/><text x="46.5" y="46.9" font-size="12" fill="#6e8ca8" text-anchor="end" >3,000</text><path d="M53 121.5 H1083" stroke="#e1e7ec" stroke-width="1" fill="none" shape-rendering="crispEdges"/><text x="46.5" y="124.9" font-size="12" fill="#6e8ca8" text-anchor="end" >2,000</text><path d="M53 197.5 H1083" stroke="#e1e7ec" stroke-width="1" fill="none" shape-rendering="crispEdges"/><text x="46.5" y="200.9" font-size="12" fill="#6e8ca8" text-anchor="end" >1,000</text><path d="M53 274.5 H1083" stroke="#d8e0e7" stroke-width="1" fill="none" shape-rendering="crispEdges"/><text x="46.5" y="277.9" font-size="12" fill="#6e8ca8" text-anchor="end" >0</text><path d="M102.6 275 v4" stroke="#d8e0e7" stroke-width="1" fill="none"/><path d="M239.2 275 v4" stroke="#d8e0e7" stroke-width="1" fill="none"/><path d="M375.8 275 v4" stroke="#d8e0e7" stroke-width="1" fill="none"/><path d="M512.4 275 v4" stroke="#d8e0e7" stroke-width="1" fill="none"/><path d="M649.0 275 v4" stroke="#d8e0e7" stroke-width="1" fill="none"/><path d="M785.6 275 v4" stroke="#d8e0e7" stroke-width="1" fill="none"/><path d="M922.2 275 v4" stroke="#d8e0e7" stroke-width="1" fill="none"/><path d="M1058.8 275 v4" stroke="#d8e0e7" stroke-width="1" fill="none"/><text x="102.6" y="291.5" font-size="10" fill="#6e8ca8" text-anchor="middle" >Apr 14</text><text x="239.2" y="291.5" font-size="10" fill="#6e8ca8" text-anchor="middle" >Apr 18</text><text x="375.8" y="291.5" font-size="10" fill="#6e8ca8" text-anchor="middle" >Apr 22</text><text x="512.4" y="291.5" font-size="10" fill="#6e8ca8" text-anchor="middle" >Apr 26</text><text x="649.0" y="291.5" font-size="10" fill="#6e8ca8" text-anchor="middle" >Apr 30</text><text x="785.6" y="291.5" font-size="10" fill="#6e8ca8" text-anchor="middle" >May 04</text><text x="922.2" y="291.5" font-size="10" fill="#6e8ca8" text-anchor="middle" >May 08</text><text x="1058.8" y="291.5" font-size="10" fill="#6e8ca8" text-anchor="middle" >May 12</text><path d="M57.50 275.0v-49.2M58.50 275.0v-57.2M59.50 275.0v-49.2M60.50 275.0v-49.2M61.50 275.0v-49.2M62.50 275.0v-49.2M63.50 275.0v-49.2M64.50 275.0v-73.3M65.50 275.0v-16.1M66.50 275.0v-57.2M67.50 275.0v-57.2M68.50 275.0v-57.2M69.50 275.0v-42.1M70.50 275.0v-16.1M71.50 275.0v-57.2M72.50 275.0v-121.5M73.50 275.0v-121.5M74.50 275.0v-42.1M75.50 275.0v-42.1M76.50 275.0v-57.2M77.50 275.0v-57.2M78.50 275.0v-34.1M79.50 275.0v-65.2M80.50 275.0v-7.7M81.50 275.0v-49.2M82.50 275.0v-49.2M83.50 275.0v-49.2M84.50 275.0v-42.1M85.50 275.0v-49.2M86.50 275.0v-49.2M87.50 275.0v-57.2M88.50 275.0v-57.2M89.50 275.0v-42.1M90.50 275.0v-42.1M91.50 275.0v-42.1M92.50 275.0v-7.7M93.50 275.0v-57.2M94.50 275.0v-49.2M95.50 275.0v-65.2M96.50 275.0v-49.2M97.50 275.0v-49.2M98.50 275.0v-73.3M99.50 275.0v-57.2M100.50 275.0v-57.2M101.50 275.0v-121.5M102.50 275.0v-34.1M103.50 275.0v-42.1M104.50 275.0v-65.2M105.50 275.0v-65.2M106.50 275.0v-34.1M107.50 275.0v-42.1M108.50 275.0v-49.2M109.50 275.0v-89.2M110.50 275.0v-130.7M111.50 275.0v-73.3M112.50 275.0v-34.1M113.50 275.0v-73.3M114.50 275.0v-129.2M115.50 275.0v-42.1M116.50 275.0v-42.1M117.50 275.0v-89.2M118.50 275.0v-49.2M119.50 275.0v-7.7M120.50 275.0v-65.2M121.50 275.0v-49.2M122.50 275.0v-49.2M123.50 275.0v-89.2M124.50 275.0v-42.1M125.50 275.0v-73.3M126.50 275.0v-42.1M127.50 275.0v-42.1M128.50 275.0v-42.1M129.50 275.0v-42.1M130.50 275.0v-49.2M131.50 275.0v-34.1M132.50 275.0v-81.3M133.50 275.0v-57.2M134.50 275.0v-57.2M135.50 275.0v-57.2M136.50 275.0v-102.3M137.50 275.0v-81.3M138.50 275.0v-81.3M139.50 275.0v-57.2M140.50 275.0v-65.2M141.50 275.0v-106.1M142.50 275.0v-121.5M143.50 275.0v-49.2M144.50 275.0v-89.2M145.50 275.0v-65.2M146.50 275.0v-49.2M147.50 275.0v-81.3M148.50 275.0v-49.2M149.50 275.0v-73.3M150.50 275.0v-57.2M151.50 275.0v-57.2M152.50 275.0v-34.1M153.50 275.0v-121.5M154.50 275.0v-42.1M155.50 275.0v-57.2M156.50 275.0v-49.2M157.50 275.0v-49.2M158.50 275.0v-49.2M159.50 275.0v-7.7M160.50 275.0v-49.2M161.50 275.0v-89.2M162.50 275.0v-49.2M163.50 275.0v-57.2M164.50 275.0v-65.2M165.50 275.0v-89.2M166.50 275.0v-42.1M167.50 275.0v-42.1M168.50 275.0v-73.3M169.50 275.0v-81.3M170.50 275.0v-57.2M171.50 275.0v-34.1M172.50 275.0v-73.3M173.50 275.0v-65.2M174.50 275.0v-65.2M175.50 275.0v-49.2M176.50 275.0v-42.1M177.50 275.0v-57.2M178.50 275.0v-42.1M179.50 275.0v-104.6M180.50 275.0v-73.3M181.50 275.0v-57.2M182.50 275.0v-42.1M183.50 275.0v-57.2M184.50 275.0v-113.8M185.50 275.0v-57.2M186.50 275.0v-42.1M187.50 275.0v-42.1M188.50 275.0v-65.2M189.50 275.0v-65.2M190.50 275.0v-49.2M191.50 275.0v-49.2M192.50 275.0v-42.1M193.50 275.0v-42.1M194.50 275.0v-65.2M195.50 275.0v-16.1M196.50 275.0v-49.2M197.50 275.0v-49.2M198.50 275.0v-34.1M199.50 275.0v-57.2M200.50 275.0v-105.4M201.50 275.0v-49.2M202.50 275.0v-49.2M203.50 275.0v-42.1M205.50 275.0v-57.2M206.50 275.0v-73.3M207.50 275.0v-42.1M208.50 275.0v-34.1M209.50 275.0v-96.9M210.50 275.0v-65.2M211.50 275.0v-34.1M212.50 275.0v-34.1M213.50 275.0v-42.1M214.50 275.0v-89.2M215.50 275.0v-115.4M216.50 275.0v-42.1M217.50 275.0v-49.2M218.50 275.0v-65.2M219.50 275.0v-7.7M220.50 275.0v-49.2M221.50 275.0v-49.2M222.50 275.0v-81.3M223.50 275.0v-121.5M224.50 275.0v-73.3M225.50 275.0v-89.2M226.50 275.0v-65.2M227.50 275.0v-57.2M228.50 275.0v-57.2M229.50 275.0v-49.2M230.50 275.0v-113.8M231.50 275.0v-113.8M232.50 275.0v-42.1M233.50 275.0v-89.2M234.50 275.0v-42.1M235.50 275.0v-49.2M236.50 275.0v-49.2M237.50 275.0v-49.2M238.50 275.0v-49.2M239.50 275.0v-26.1M240.50 275.0v-73.3M241.50 275.0v-49.2M242.50 275.0v-16.1M243.50 275.0v-96.9M244.50 275.0v-42.1M245.50 275.0v-34.1M246.50 275.0v-73.3M247.50 275.0v-96.9M248.50 275.0v-49.2M249.50 275.0v-42.1M250.50 275.0v-42.1M251.50 275.0v-42.1M252.50 275.0v-42.1M253.50 275.0v-57.2M254.50 275.0v-49.2M255.50 275.0v-34.1M256.50 275.0v-34.1M257.50 275.0v-34.1M258.50 275.0v-49.2M259.50 275.0v-49.2M260.50 275.0v-49.2M261.50 275.0v-42.1M262.50 275.0v-57.2M263.50 275.0v-73.3M264.50 275.0v-73.3M265.50 275.0v-65.2M266.50 275.0v-138.4M267.50 275.0v-81.3M268.50 275.0v-42.1M269.50 275.0v-42.1M270.50 275.0v-42.1M271.50 275.0v-100.0M272.50 275.0v-42.1M273.50 275.0v-42.1M274.50 275.0v-107.7M275.50 275.0v-73.3M276.50 275.0v-73.3M277.50 275.0v-49.2M278.50 275.0v-49.2M279.50 275.0v-57.2M280.50 275.0v-57.2M281.50 275.0v-49.2M282.50 275.0v-49.2M283.50 275.0v-49.2M284.50 275.0v-49.2M285.50 275.0v-57.2M286.50 275.0v-57.2M287.50 275.0v-57.2M288.50 275.0v-73.3M289.50 275.0v-73.3M290.50 275.0v-16.1M291.50 275.0v-34.1M292.50 275.0v-49.2M293.50 275.0v-49.2M294.50 275.0v-49.2M295.50 275.0v-49.2M296.50 275.0v-49.2M297.50 275.0v-49.2M298.50 275.0v-49.2M299.50 275.0v-65.2M300.50 275.0v-34.1M301.50 275.0v-81.3M302.50 275.0v-89.2M303.50 275.0v-49.2M304.50 275.0v-73.3M305.50 275.0v-81.3M306.50 275.0v-65.2M307.50 275.0v-49.2M308.50 275.0v-81.3M309.50 275.0v-65.2M310.50 275.0v-49.2M311.50 275.0v-34.1M312.50 275.0v-34.1M313.50 275.0v-49.2M314.50 275.0v-57.2M315.50 275.0v-96.9M316.50 275.0v-42.1M317.50 275.0v-42.1M318.50 275.0v-49.2M319.50 275.0v-49.2M320.50 275.0v-49.2M321.50 275.0v-49.2M322.50 275.0v-42.1M323.50 275.0v-49.2M324.50 275.0v-49.2M325.50 275.0v-42.1M326.50 275.0v-42.1M327.50 275.0v-49.2M328.50 275.0v-49.2M329.50 275.0v-49.2M330.50 275.0v-49.2M331.50 275.0v-89.2M332.50 275.0v-49.2M333.50 275.0v-73.3M334.50 275.0v-57.2M335.50 275.0v-49.2M336.50 275.0v-49.2M337.50 275.0v-49.2M338.50 275.0v-42.1M339.50 275.0v-57.2M340.50 275.0v-26.1M341.50 275.0v-130.7M342.50 275.0v-26.1M343.50 275.0v-49.2M344.50 275.0v-49.2M345.50 275.0v-104.6M346.50 275.0v-65.2M347.50 275.0v-65.2M348.50 275.0v-65.2M349.50 275.0v-34.1M350.50 275.0v-34.1M351.50 275.0v-89.2M352.50 275.0v-7.7M353.50 275.0v-42.1M354.50 275.0v-42.1M355.50 275.0v-49.2M356.50 275.0v-49.2M357.50 275.0v-57.2M358.50 275.0v-65.2M359.50 275.0v-121.5M360.50 275.0v-34.1M361.50 275.0v-49.2M362.50 275.0v-111.5M363.50 275.0v-49.2M364.50 275.0v-42.1M365.50 275.0v-65.2M366.50 275.0v-100.0M367.50 275.0v-42.1M368.50 275.0v-42.1M369.50 275.0v-49.2M370.50 275.0v-42.1M371.50 275.0v-42.1M372.50 275.0v-42.1M373.50 275.0v-16.1M374.50 275.0v-34.1M375.50 275.0v-57.2M376.50 275.0v-96.1M377.50 275.0v-57.2M378.50 275.0v-57.2M379.50 275.0v-42.1M380.50 275.0v-42.1M381.50 275.0v-34.1M382.50 275.0v-57.2M383.50 275.0v-42.1M384.50 275.0v-42.1M385.50 275.0v-49.2M386.50 275.0v-121.5M387.50 275.0v-65.2M388.50 275.0v-42.1M389.50 275.0v-57.2M390.50 275.0v-42.1M391.50 275.0v-49.2M392.50 275.0v-73.3M393.50 275.0v-73.3M394.50 275.0v-42.1M395.50 275.0v-159.2M396.50 275.0v-57.2M397.50 275.0v-49.2M398.50 275.0v-42.1M399.50 275.0v-42.1M400.50 275.0v-42.1M401.50 275.0v-42.1M402.50 275.0v-57.2M403.50 275.0v-57.2M404.50 275.0v-49.2M405.50 275.0v-49.2M406.50 275.0v-89.2M407.50 275.0v-34.1M408.50 275.0v-26.1M409.50 275.0v-26.1M410.50 275.0v-57.2M411.50 275.0v-49.2M412.50 275.0v-49.2M413.50 275.0v-65.2M414.50 275.0v-65.2M415.50 275.0v-49.2M416.50 275.0v-57.2M417.50 275.0v-57.2M418.50 275.0v-26.1M419.50 275.0v-26.1M420.50 275.0v-65.2M421.50 275.0v-34.1M422.50 275.0v-34.1M423.50 275.0v-57.2M424.50 275.0v-42.1M425.50 275.0v-49.2M426.50 275.0v-49.2M427.50 275.0v-96.9M428.50 275.0v-49.2M429.50 275.0v-115.4M430.50 275.0v-34.1M431.50 275.0v-26.1M432.50 275.0v-26.1M433.50 275.0v-26.1M434.50 275.0v-49.2M435.50 275.0v-7.7M436.50 275.0v-73.3M437.50 275.0v-73.3M438.50 275.0v-65.2M439.50 275.0v-65.2M440.50 275.0v-42.1M441.50 275.0v-42.1M442.50 275.0v-7.7M443.50 275.0v-42.1M444.50 275.0v-81.3M445.50 275.0v-81.3M446.50 275.0v-49.2M447.50 275.0v-49.2M448.50 275.0v-49.2M449.50 275.0v-57.2M450.50 275.0v-49.2M451.50 275.0v-81.3M452.50 275.0v-81.3M453.50 275.0v-57.2M454.50 275.0v-146.1M455.50 275.0v-57.2M456.50 275.0v-49.2M457.50 275.0v-89.2M458.50 275.0v-49.2M459.50 275.0v-16.1M460.50 275.0v-113.8M461.50 275.0v-65.2M462.50 275.0v-96.9M463.50 275.0v-81.3M464.50 275.0v-42.1M465.50 275.0v-81.3M466.50 275.0v-81.3M467.50 275.0v-123.0M468.50 275.0v-81.3M469.50 275.0v-34.1M470.50 275.0v-57.2M471.50 275.0v-7.7M473.50 275.0v-73.3M474.50 275.0v-34.1M475.50 275.0v-34.1M476.50 275.0v-49.2M477.50 275.0v-96.9M479.50 275.0v-42.1M480.50 275.0v-65.2M481.50 275.0v-16.1M482.50 275.0v-34.1M483.50 275.0v-42.1M484.50 275.0v-34.1M485.50 275.0v-49.2M486.50 275.0v-49.2M487.50 275.0v-34.1M488.50 275.0v-49.2M489.50 275.0v-73.3M491.50 275.0v-130.7M492.50 275.0v-65.2M493.50 275.0v-57.2M495.50 275.0v-65.2M496.50 275.0v-57.2M497.50 275.0v-49.2M498.50 275.0v-42.1M499.50 275.0v-49.2M500.50 275.0v-49.2M501.50 275.0v-65.2M502.50 275.0v-192.3M503.50 275.0v-96.9M504.50 275.0v-49.2M505.50 275.0v-34.1M506.50 275.0v-34.1M507.50 275.0v-34.1M508.50 275.0v-26.1M509.50 275.0v-34.1M510.50 275.0v-34.1M511.50 275.0v-34.1M512.50 275.0v-89.2M513.50 275.0v-57.2M514.50 275.0v-160.0M515.50 275.0v-73.3M516.50 275.0v-42.1M518.50 275.0v-57.2M519.50 275.0v-65.2M520.50 275.0v-65.2M521.50 275.0v-42.1M522.50 275.0v-100.0M523.50 275.0v-57.2M524.50 275.0v-49.2M525.50 275.0v-65.2M526.50 275.0v-65.2M527.50 275.0v-65.2M528.50 275.0v-49.2M529.50 275.0v-49.2M530.50 275.0v-65.2M531.50 275.0v-49.2M532.50 275.0v-49.2M533.50 275.0v-89.2M534.50 275.0v-65.2M535.50 275.0v-49.2M536.50 275.0v-49.2M537.50 275.0v-81.3M538.50 275.0v-81.3M539.50 275.0v-65.2M540.50 275.0v-57.2M541.50 275.0v-7.7M542.50 275.0v-81.3M543.50 275.0v-73.3M544.50 275.0v-34.1M545.50 275.0v-42.1M546.50 275.0v-42.1M547.50 275.0v-42.1M548.50 275.0v-42.1M549.50 275.0v-42.1M550.50 275.0v-115.4M551.50 275.0v-121.5M552.50 275.0v-34.1M553.50 275.0v-73.3M554.50 275.0v-57.2M555.50 275.0v-57.2M556.50 275.0v-57.2M557.50 275.0v-167.6M558.50 275.0v-123.0M559.50 275.0v-49.2M560.50 275.0v-49.2M561.50 275.0v-34.1M562.50 275.0v-34.1M563.50 275.0v-65.2M564.50 275.0v-65.2M565.50 275.0v-65.2M566.50 275.0v-42.1M567.50 275.0v-81.3M568.50 275.0v-49.2M569.50 275.0v-81.3M570.50 275.0v-81.3" stroke="#78be00" stroke-width="1.05" fill="none" shape-rendering="crispEdges"/></svg><div class="lg" style="left:17px;top:299px;width:600px;height:18px"><div class="r"><span class="i"><span class="d" style="background:#f2643c"></span>Failure</span><span class="i"><span class="d" style="background:#78be00"></span>Success</span></div></div></div>
<div class="pn" style="left:12px;top:1407px;width:363px;height:336px"><div class="pt pt14">Requests by Version Alias</div><svg width="363" height="336" viewBox="0 0 363 336"><path fill-rule="evenodd" fill="#1776b6" d="M100.6 177.8499999999999 a80.9 80.9 0 1 0 161.8 0 a80.9 80.9 0 1 0 -161.8 0 Z M156.9 177.8499999999999 a24.6 24.6 0 1 0 49.2 0 a24.6 24.6 0 1 0 -49.2 0 Z"/><path d="M181.5 258 V283.29999999999995 H191" fill="none" stroke="#1776b6" stroke-width="1.2"/><text x="191.7" y="277.4" font-size="14" fill="#1d2a44" text-anchor="start" >36.6k (100.0%)</text><text x="191.7" y="293.5" font-size="14" fill="#1d2a44" text-anchor="start" >$LATEST</text></svg></div>
<div class="pn" style="left:383px;top:1407px;width:1105px;height:336px"><div class="pt pt16">Requests by Version Alias</div><svg width="1105" height="336" viewBox="0 0 1105 336"><path d="M48 44.5 H1083" stroke="#e1e7ec" stroke-width="1" fill="none" shape-rendering="crispEdges"/><text x="43" y="47.9" font-size="12" fill="#6e8ca8" text-anchor="end" >2M</text><path d="M48 95.5 H1083" stroke="#e1e7ec" stroke-width="1" fill="none" shape-rendering="crispEdges"/><text x="43" y="98.9" font-size="12" fill="#6e8ca8" text-anchor="end" >1.5M</text><path d="M48 147.5 H1083" stroke="#e1e7ec" stroke-width="1" fill="none" shape-rendering="crispEdges"/><text x="43" y="150.9" font-size="12" fill="#6e8ca8" text-anchor="end" >1M</text><path d="M48 198.5 H1083" stroke="#e1e7ec" stroke-width="1" fill="none" shape-rendering="crispEdges"/><text x="43" y="201.9" font-size="12" fill="#6e8ca8" text-anchor="end" >500k</text><path d="M48 249.5 H1083" stroke="#d8e0e7" stroke-width="1" fill="none" shape-rendering="crispEdges"/><text x="43" y="252.9" font-size="12" fill="#6e8ca8" text-anchor="end" >0</text><path d="M311 250 v4" stroke="#d8e0e7" stroke-width="1" fill="none"/><path d="M826 250 v4" stroke="#d8e0e7" stroke-width="1" fill="none"/><text x="311" y="266.6" font-size="10" fill="#6e8ca8" text-anchor="middle" >$LATEST</text><text x="826" y="266.6" font-size="10" fill="#6e8ca8" text-anchor="middle" >1</text><rect x="230.0" y="77.5" width="162" height="9.5" fill="#dfb82e"/><rect x="230.0" y="87" width="162" height="162.3" fill="#8dcb1e"/></svg><div class="lg" style="left:17px;top:274px;width:1080px;height:49.5px"><div class="r"><span class="i"><span class="d" style="background:#b656f0"></span>hpalsumotestext</span><span class="i"><span class="d" style="background:#4257dd"></span>lambda-async-metrics-HelloWorldFunction-Ye1iCtxo8alv</span><span class="i"><span class="d" style="background:#fbc88f"></span>mydata</span><span class="i"><span class="d" style="background:#a3a9f2"></span>mynewtest</span><span class="i"><span class="d" style="background:#e2b9f7"></span>mytest</span></div><div class="r"><span class="i"><span class="d" style="background:#1194d6"></span>MyTestEBS-AutoEnableOptio-EnableNewAWSResourcesLam-m6QvDffpOzG4</span><span class="i"><span class="d" style="background:#8fdcf7"></span>MyTestEBS-AutoEnableOptio-EnableNewAWSResourcesLam-OgXn7Fgg772L</span><span class="i"><span class="d" style="background:#7fc31c"></span>New-Debug-Small-Python</span></div><div class="r"><span class="i"><span class="d" style="background:#dfb82e"></span>New-Info-Small-Python</span></div></div></div>
<div class="pn" style="left:12px;top:1751px;width:1476px;height:336px"><div class="pt pt14">Function by Version Alias, RequestID</div><div class="abs" style="left:12.0px;top:32.0px;width:1452.0px;height:292.0px;border:1px solid #d6dfe8;overflow:hidden;font-size:12px;line-height:14px"><div class="abs" style="left:0;top:0;width:100%;height:22px;background:#f5f8fb;border-bottom:1px solid #d6dfe8;box-sizing:content-box;color:#4b6e8d"><div class="abs" style="left:43.1px;top:4px;white-space:nowrap">functionname</div><div class="abs" style="left:455.4px;top:4px;white-space:nowrap">version</div><div class="abs" style="left:692.8px;top:4px;white-space:nowrap">eventStatus</div><div class="abs" style="left:950.8px;top:4px;white-space:nowrap">RequestId</div><div class="abs" style="right:23.2px;top:4px;white-space:nowrap">frequency</div><div class="abs" style="left:440.0px;top:4px;width:1px;height:14px;background:#8da2b7"></div><div class="abs" style="left:676.3px;top:4px;width:1px;height:14px;background:#8da2b7"></div><div class="abs" style="left:934.9px;top:4px;width:1px;height:14px;background:#8da2b7"></div><div class="abs" style="left:1340.0px;top:4px;width:1px;height:14px;background:#8da2b7"></div></div><div class="abs" style="left:0;top:23.0px;width:100%;height:37px;border-bottom:1px solid #d6dfe8;color:#222"><div class="abs" style="left:-6.4px;width:40px;text-align:center;top:4px;color:#8aa0b8">1</div><div class="abs" style="left:43.1px;top:4px;white-space:nowrap;">MyTestEBS-AutoEnableOptio-EnableNewAWSResourcesLam-<br>OgXn7Fgg772L</div><div class="abs" style="left:459.3px;top:4px;white-space:nowrap;">$LATEST</div><div class="abs" style="left:700.6px;top:4px;white-space:nowrap;">Success</div><div class="abs" style="left:961.9px;top:4px;white-space:nowrap;"></div><div class="abs" style="right:8.4px;top:4px;white-space:nowrap;font-family:'Liberation Mono',monospace;">20</div></div><div class="abs" style="left:0;top:60.0px;width:100%;height:37px;border-bottom:1px solid #d6dfe8;color:#222"><div class="abs" style="left:-6.4px;width:40px;text-align:center;top:4px;color:#8aa0b8">2</div><div class="abs" style="left:43.1px;top:4px;white-space:nowrap;">MyTestEBS-AutoEnableOptio-EnableNewAWSResourcesLam-<br>OgXn7Fgg772L</div><div class="abs" style="left:459.3px;top:4px;white-space:nowrap;">$LATEST</div><div class="abs" style="left:700.6px;top:4px;white-space:nowrap;">Success</div><div class="abs" style="left:961.9px;top:4px;white-space:nowrap;">c1944356-282f-451b-b242-4528f04582b6</div><div class="abs" style="right:8.4px;top:4px;white-space:nowrap;font-family:'Liberation Mono',monospace;">1</div></div><div class="abs" style="left:0;top:97.0px;width:100%;height:37px;border-bottom:1px solid #d6dfe8;color:#222"><div class="abs" style="left:-6.4px;width:40px;text-align:center;top:4px;color:#8aa0b8">3</div><div class="abs" style="left:43.1px;top:4px;white-space:nowrap;">MyTestEBS-AutoEnableOptio-EnableNewAWSResourcesLam-<br>m6QvDffpOzG4</div><div class="abs" style="left:459.3px;top:4px;white-space:nowrap;">$LATEST</div><div class="abs" style="left:700.6px;top:4px;white-space:nowrap;">Success</div><div class="abs" style="left:961.9px;top:4px;white-space:nowrap;">b165c84a-edae-4f29-94f1-92721e555780</div><div class="abs" style="right:8.4px;top:4px;white-space:nowrap;font-family:'Liberation Mono',monospace;">1</div></div><div class="abs" style="left:0;top:134.0px;width:100%;height:37px;border-bottom:1px solid #d6dfe8;color:#222"><div class="abs" style="left:-6.4px;width:40px;text-align:center;top:4px;color:#8aa0b8">4</div><div class="abs" style="left:43.1px;top:4px;white-space:nowrap;">MyTestEBS-AutoEnableOptio-EnableNewAWSResourcesLam-<br>m6QvDffpOzG4</div><div class="abs" style="left:459.3px;top:4px;white-space:nowrap;">$LATEST</div><div class="abs" style="left:700.6px;top:4px;white-space:nowrap;">Success</div><div class="abs" style="left:961.9px;top:4px;white-space:nowrap;"></div><div class="abs" style="right:8.4px;top:4px;white-space:nowrap;font-family:'Liberation Mono',monospace;">21</div></div><div class="abs" style="left:0;top:171.0px;width:100%;height:23px;border-bottom:1px solid #d6dfe8;color:#222"><div class="abs" style="left:-6.4px;width:40px;text-align:center;top:4px;color:#8aa0b8">5</div><div class="abs" style="left:43.1px;top:4px;white-space:nowrap;">New-Debug-Small-Python</div><div class="abs" style="left:459.3px;top:4px;white-space:nowrap;">$LATEST</div><div class="abs" style="left:700.6px;top:4px;white-space:nowrap;">Success</div><div class="abs" style="left:961.9px;top:4px;white-space:nowrap;">51fc8cc0-f42c-43a3-90f1-329951fc7a17</div><div class="abs" style="right:8.4px;top:4px;white-space:nowrap;font-family:'Liberation Mono',monospace;">3</div></div><div class="abs" style="left:0;top:194.0px;width:100%;height:23px;border-bottom:1px solid #d6dfe8;color:#222"><div class="abs" style="left:-6.4px;width:40px;text-align:center;top:4px;color:#8aa0b8">6</div><div class="abs" style="left:43.1px;top:4px;white-space:nowrap;">New-Debug-Small-Python</div><div class="abs" style="left:459.3px;top:4px;white-space:nowrap;">$LATEST</div><div class="abs" style="left:700.6px;top:4px;white-space:nowrap;">Success</div><div class="abs" style="left:961.9px;top:4px;white-space:nowrap;">6465c52d-6ff5-4078-ab01-5b2ad81bf719</div><div class="abs" style="right:8.4px;top:4px;white-space:nowrap;font-family:'Liberation Mono',monospace;">3</div></div><div class="abs" style="left:0;top:217.0px;width:100%;height:23px;border-bottom:1px solid #d6dfe8;color:#222"><div class="abs" style="left:-6.4px;width:40px;text-align:center;top:4px;color:#8aa0b8">7</div><div class="abs" style="left:43.1px;top:4px;white-space:nowrap;">New-Debug-Small-Python</div><div class="abs" style="left:459.3px;top:4px;white-space:nowrap;">$LATEST</div><div class="abs" style="left:700.6px;top:4px;white-space:nowrap;">Success</div><div class="abs" style="left:961.9px;top:4px;white-space:nowrap;">eed19ac0-5fb8-4265-8880-4ce22bc8e5f2</div><div class="abs" style="right:8.4px;top:4px;white-space:nowrap;font-family:'Liberation Mono',monospace;">3</div></div><div class="abs" style="left:0;top:240.0px;width:100%;height:23px;border-bottom:1px solid #d6dfe8;color:#222"><div class="abs" style="left:-6.4px;width:40px;text-align:center;top:4px;color:#8aa0b8">8</div><div class="abs" style="left:43.1px;top:4px;white-space:nowrap;">New-Debug-Small-Python</div><div class="abs" style="left:459.3px;top:4px;white-space:nowrap;">$LATEST</div><div class="abs" style="left:700.6px;top:4px;white-space:nowrap;">Success</div><div class="abs" style="left:961.9px;top:4px;white-space:nowrap;">b6cf08f4-5991-465c-bca9-5d2ca7ea1ce3</div><div class="abs" style="right:8.4px;top:4px;white-space:nowrap;font-family:'Liberation Mono',monospace;">3</div></div><div class="abs" style="left:0;top:263.0px;width:100%;height:23px;border-bottom:1px solid #d6dfe8;color:#222"><div class="abs" style="left:-6.4px;width:40px;text-align:center;top:4px;color:#8aa0b8">9</div><div class="abs" style="left:43.1px;top:4px;white-space:nowrap;">New-Debug-Small-Python</div><div class="abs" style="left:459.3px;top:4px;white-space:nowrap;">$LATEST</div><div class="abs" style="left:700.6px;top:4px;white-space:nowrap;">Success</div><div class="abs" style="left:961.9px;top:4px;white-space:nowrap;">7f51d92d-e1d0-4e80-8e3a-81b85abb3d3a</div><div class="abs" style="right:8.4px;top:4px;white-space:nowrap;font-family:'Liberation Mono',monospace;">3</div></div></div></div>
<div class="pn" style="left:12px;top:2138px;width:549px;height:336px"><div class="pt pt16">Function Publish Version Operations</div><div class="pt pt14" style="top:28px">2025-04-12 4:59:47 PM to 2025-05-12 4:59:47 PM</div><div class="abs" style="left:12.0px;top:54.0px;width:525.0px;height:270.0px;border:1px solid #d6dfe8;overflow:hidden;font-size:12px;line-height:14px"><div class="abs" style="left:0;top:0;width:100%;height:22px;background:#f5f8fb;border-bottom:1px solid #d6dfe8;box-sizing:content-box;color:#4b6e8d"><div class="abs" style="left:31.3px;top:4px;white-space:nowrap">functionname</div><div class="abs" style="left:172.7px;top:4px;white-space:nowrap">function_version</div><div class="abs" style="left:329.5px;top:4px;white-space:nowrap">publish_time</div><div class="abs" style="left:156.7px;top:4px;width:1px;height:14px;background:#8da2b7"></div><div class="abs" style="left:312.5px;top:4px;width:1px;height:14px;background:#8da2b7"></div></div><div class="abs" style="left:0;top:23.0px;width:100%;height:23px;border-bottom:1px solid #d6dfe8;color:#222"><div class="abs" style="left:-12.4px;width:40px;text-align:center;top:4px;color:#8aa0b8">1</div><div class="abs" style="left:31.3px;top:4px;white-space:nowrap;">mytest</div><div class="abs" style="left:172.7px;top:4px;white-space:nowrap;">1</div><div class="abs" style="left:329.5px;top:4px;white-space:nowrap;">2025/05/08 11:25:49 +0530</div></div></div></div>
<div class="pn" style="left:569px;top:2138px;width:920px;height:336px"><div class="pt pt16">Function CUD Operations</div><div class="pt pt14" style="top:28px">2025-04-12 4:59:42 PM to 2025-05-12 4:59:42 PM</div><div class="abs" style="left:12.0px;top:54.0px;width:896.0px;height:270.0px;border:1px solid #d6dfe8;overflow:hidden;font-size:12px;line-height:14px"><div class="abs" style="left:0;top:0;width:100%;height:22px;background:#f5f8fb;border-bottom:1px solid #d6dfe8;box-sizing:content-box;color:#4b6e8d"><div class="abs" style="left:37.0px;top:4px;white-space:nowrap">functionname</div><div class="abs" style="left:435.8px;top:4px;white-space:nowrap">event_name</div><div class="abs" style="right:23.1px;top:4px;white-space:nowrap">count</div><div class="abs" style="left:419.8px;top:4px;width:1px;height:14px;background:#8da2b7"></div><div class="abs" style="left:813.0px;top:4px;width:1px;height:14px;background:#8da2b7"></div></div><div class="abs" style="left:0;top:23.0px;width:100%;height:23px;border-bottom:1px solid #d6dfe8;color:#222"><div class="abs" style="left:-9.6px;width:40px;text-align:center;top:4px;color:#8aa0b8">1</div><div class="abs" style="left:37.0px;top:4px;white-space:nowrap;">ActionableTemporary</div><div class="abs" style="left:443.5px;top:4px;white-space:nowrap;">UpdateFunctionCode20150331v2</div><div class="abs" style="right:8.7px;top:4px;white-space:nowrap;font-family:'Liberation Mono',monospace;">774</div></div><div class="abs" style="left:0;top:46.0px;width:100%;height:23px;border-bottom:1px solid #d6dfe8;color:#222"><div class="abs" style="left:-9.6px;width:40px;text-align:center;top:4px;color:#8aa0b8">2</div><div class="abs" style="left:37.0px;top:4px;white-space:nowrap;">rdsconnect</div><div class="abs" style="left:443.5px;top:4px;white-space:nowrap;">UpdateFunctionCode20150331v2</div><div class="abs" style="right:8.7px;top:4px;white-space:nowrap;font-family:'Liberation Mono',monospace;">33</div></div><div class="abs" style="left:0;top:69.0px;width:100%;height:23px;border-bottom:1px solid #d6dfe8;color:#222"><div class="abs" style="left:-9.6px;width:40px;text-align:center;top:4px;color:#8aa0b8">3</div><div class="abs" style="left:37.0px;top:4px;white-space:nowrap;">rdsconnect</div><div class="abs" style="left:443.5px;top:4px;white-space:nowrap;">UpdateFunctionConfiguration20150331v2</div><div class="abs" style="right:8.7px;top:4px;white-space:nowrap;font-family:'Liberation Mono',monospace;">17</div></div><div class="abs" style="left:0;top:92.0px;width:100%;height:23px;border-bottom:1px solid #d6dfe8;color:#222"><div class="abs" style="left:-9.6px;width:40px;text-align:center;top:4px;color:#8aa0b8">4</div><div class="abs" style="left:37.0px;top:4px;white-space:nowrap;">mynewtest</div><div class="abs" style="left:443.5px;top:4px;white-space:nowrap;">CreateFunction20150331</div><div class="abs" style="right:8.7px;top:4px;white-space:nowrap;font-family:'Liberation Mono',monospace;">5</div></div><div class="abs" style="left:0;top:115.0px;width:100%;height:23px;border-bottom:1px solid #d6dfe8;color:#222"><div class="abs" style="left:-9.6px;width:40px;text-align:center;top:4px;color:#8aa0b8">5</div><div class="abs" style="left:37.0px;top:4px;white-space:nowrap;">rdsconnect</div><div class="abs" style="left:443.5px;top:4px;white-space:nowrap;">CreateFunction20150331</div><div class="abs" style="right:8.7px;top:4px;white-space:nowrap;font-family:'Liberation Mono',monospace;">4</div></div><div class="abs" style="left:0;top:138.0px;width:100%;height:23px;border-bottom:1px solid #d6dfe8;color:#222"><div class="abs" style="left:-9.6px;width:40px;text-align:center;top:4px;color:#8aa0b8">6</div><div class="abs" style="left:37.0px;top:4px;white-space:nowrap;">mytest</div><div class="abs" style="left:443.5px;top:4px;white-space:nowrap;">CreateFunction20150331</div><div class="abs" style="right:8.7px;top:4px;white-space:nowrap;font-family:'Liberation Mono',monospace;">4</div></div><div class="abs" style="left:0;top:161.0px;width:100%;height:23px;border-bottom:1px solid #d6dfe8;color:#222"><div class="abs" style="left:-9.6px;width:40px;text-align:center;top:4px;color:#8aa0b8">7</div><div class="abs" style="left:37.0px;top:4px;white-space:nowrap;">mydata</div><div class="abs" style="left:443.5px;top:4px;white-space:nowrap;">CreateFunction20150331</div><div class="abs" style="right:8.7px;top:4px;white-space:nowrap;font-family:'Liberation Mono',monospace;">4</div></div><div class="abs" style="left:0;top:184.0px;width:100%;height:23px;border-bottom:1px solid #d6dfe8;color:#222"><div class="abs" style="left:-9.6px;width:40px;text-align:center;top:4px;color:#8aa0b8">8</div><div class="abs" style="left:37.0px;top:4px;white-space:nowrap;">lambda-async-metrics-HelloWorldFunction-Ye1iCtxo8alv</div><div class="abs" style="left:443.5px;top:4px;white-space:nowrap;">UpdateFunctionCode20150331v2</div><div class="abs" style="right:8.7px;top:4px;white-space:nowrap;font-family:'Liberation Mono',monospace;">2</div></div><div class="abs" style="left:0;top:207.0px;width:100%;height:37px;border-bottom:1px solid #d6dfe8;color:#222"><div class="abs" style="left:-9.6px;width:40px;text-align:center;top:4px;color:#8aa0b8">9</div><div class="abs" style="left:37.0px;top:4px;white-space:nowrap;">testpermissioncheck002-Perm-rSumoLogicLambdaHelper-<br>az1A7fQSIJm7</div><div class="abs" style="left:443.5px;top:4px;white-space:nowrap;">DeleteFunction20150331</div><div class="abs" style="right:8.7px;top:4px;white-space:nowrap;font-family:'Liberation Mono',monospace;">1</div></div><div class="abs" style="left:0;top:244.0px;width:100%;height:37px;border-bottom:1px solid #d6dfe8;color:#222"><div class="abs" style="left:-9.6px;width:40px;text-align:center;top:4px;color:#8aa0b8">10</div><div class="abs" style="left:37.0px;top:4px;white-space:nowrap;">testpermissioncheck002-Perm-rSumoLogicLambdaHelper-<br>az1A7fQSIJm7</div><div class="abs" style="left:443.5px;top:4px;white-space:nowrap;">CreateFunction20150331</div><div class="abs" style="right:8.7px;top:4px;white-space:nowrap;font-family:'Liberation Mono',monospace;">1</div></div></div></div>
<div class="pn" style="left:12px;top:2482px;width:549px;height:336px"><div class="pt pt14">Top Source IPs</div><div class="abs" style="left:12.0px;top:32.0px;width:525.0px;height:292.0px;border:1px solid #d6dfe8;overflow:hidden;font-size:12px;line-height:14px"><div class="abs" style="left:0;top:0;width:100%;height:22px;background:#f5f8fb;border-bottom:1px solid #d6dfe8;box-sizing:content-box;color:#4b6e8d"><div class="abs" style="left:36.8px;top:4px;white-space:nowrap">src_ip</div><div class="abs" style="right:8.5px;top:4px;white-space:nowrap">events</div><div class="abs" style="left:449.9px;top:4px;width:1px;height:14px;background:#8da2b7"></div></div><div class="abs" style="left:0;top:23.0px;width:100%;height:23px;border-bottom:1px solid #d6dfe8;color:#222"><div class="abs" style="left:-9.4px;width:40px;text-align:center;top:4px;color:#8aa0b8">1</div><div class="abs" style="left:36.8px;top:4px;white-space:nowrap;">3.235.209.244</div><div class="abs" style="right:8.5px;top:4px;white-space:nowrap;font-family:'Liberation Mono',monospace;">31,624</div></div><div class="abs" style="left:0;top:46.0px;width:100%;height:23px;border-bottom:1px solid #d6dfe8;color:#222"><div class="abs" style="left:-9.4px;width:40px;text-align:center;top:4px;color:#8aa0b8">2</div><div class="abs" style="left:36.8px;top:4px;white-space:nowrap;">54.221.187.26</div><div class="abs" style="right:8.5px;top:4px;white-space:nowrap;font-family:'Liberation Mono',monospace;">29,693</div></div><div class="abs" style="left:0;top:69.0px;width:100%;height:23px;border-bottom:1px solid #d6dfe8;color:#222"><div class="abs" style="left:-9.4px;width:40px;text-align:center;top:4px;color:#8aa0b8">3</div><div class="abs" style="left:36.8px;top:4px;white-space:nowrap;">44.193.27.136</div><div class="abs" style="right:8.5px;top:4px;white-space:nowrap;font-family:'Liberation Mono',monospace;">22,939</div></div><div class="abs" style="left:0;top:92.0px;width:100%;height:23px;border-bottom:1px solid #d6dfe8;color:#222"><div class="abs" style="left:-9.4px;width:40px;text-align:center;top:4px;color:#8aa0b8">4</div><div class="abs" style="left:36.8px;top:4px;white-space:nowrap;">13.52.148.107</div><div class="abs" style="right:8.5px;top:4px;white-space:nowrap;font-family:'Liberation Mono',monospace;">14,083</div></div><div class="abs" style="left:0;top:115.0px;width:100%;height:23px;border-bottom:1px solid #d6dfe8;color:#222"><div class="abs" style="left:-9.4px;width:40px;text-align:center;top:4px;color:#8aa0b8">5</div><div class="abs" style="left:36.8px;top:4px;white-space:nowrap;">52.52.20.134</div><div class="abs" style="right:8.5px;top:4px;white-space:nowrap;font-family:'Liberation Mono',monospace;">12,377</div></div><div class="abs" style="left:0;top:138.0px;width:100%;height:23px;border-bottom:1px solid #d6dfe8;color:#222"><div class="abs" style="left:-9.4px;width:40px;text-align:center;top:4px;color:#8aa0b8">6</div><div class="abs" style="left:36.8px;top:4px;white-space:nowrap;">52.71.142.87</div><div class="abs" style="right:8.5px;top:4px;white-space:nowrap;font-family:'Liberation Mono',monospace;">9,553</div></div><div class="abs" style="left:0;top:161.0px;width:100%;height:23px;border-bottom:1px solid #d6dfe8;color:#222"><div class="abs" style="left:-9.4px;width:40px;text-align:center;top:4px;color:#8aa0b8">7</div><div class="abs" style="left:36.8px;top:4px;white-space:nowrap;">35.80.196.59</div><div class="abs" style="right:8.5px;top:4px;white-space:nowrap;font-family:'Liberation Mono',monospace;">7,790</div></div><div class="abs" style="left:0;top:184.0px;width:100%;height:23px;border-bottom:1px solid #d6dfe8;color:#222"><div class="abs" style="left:-9.4px;width:40px;text-align:center;top:4px;color:#8aa0b8">8</div><div class="abs" style="left:36.8px;top:4px;white-space:nowrap;">35.160.117.193</div><div class="abs" style="right:8.5px;top:4px;white-space:nowrap;font-family:'Liberation Mono',monospace;">7,644</div></div><div class="abs" style="left:0;top:207.0px;width:100%;height:23px;border-bottom:1px solid #d6dfe8;color:#222"><div class="abs" style="left:-9.4px;width:40px;text-align:center;top:4px;color:#8aa0b8">9</div><div class="abs" style="left:36.8px;top:4px;white-space:nowrap;">3.70.78.136</div><div class="abs" style="right:8.5px;top:4px;white-space:nowrap;font-family:'Liberation Mono',monospace;">7,260</div></div><div class="abs" style="left:0;top:230.0px;width:100%;height:23px;border-bottom:1px solid #d6dfe8;color:#222"><div class="abs" style="left:-9.4px;width:40px;text-align:center;top:4px;color:#8aa0b8">10</div><div class="abs" style="left:36.8px;top:4px;white-space:nowrap;">54.69.47.156</div><div class="abs" style="right:8.5px;top:4px;white-space:nowrap;font-family:'Liberation Mono',monospace;">6,904</div></div></div></div>
<div class="pn" style="left:569px;top:2482px;width:920px;height:336px"><div class="pt pt16">Function Permission Operations</div><div class="abs" style="left:12.0px;top:34.0px;width:896.0px;height:290.0px;border:1px solid #d6dfe8;overflow:hidden;font-size:12px;line-height:14px"><div class="abs" style="left:0;top:0;width:100%;height:22px;background:#f5f8fb;border-bottom:1px solid #d6dfe8;box-sizing:content-box;color:#4b6e8d"><div class="abs" style="left:30.9px;top:4px;white-space:nowrap">functionname</div><div class="abs" style="left:472.3px;top:4px;white-space:nowrap">event_name</div><div class="abs" style="right:8.2px;top:4px;white-space:nowrap">count</div><div class="abs" style="left:455.7px;top:4px;width:1px;height:14px;background:#8da2b7"></div><div class="abs" style="left:827.9px;top:4px;width:1px;height:14px;background:#8da2b7"></div></div><div class="abs" style="left:0;top:23.0px;width:100%;height:23px;border-bottom:1px solid #d6dfe8;color:#222"><div class="abs" style="left:-12.5px;width:40px;text-align:center;top:4px;color:#8aa0b8">1</div><div class="abs" style="left:30.9px;top:4px;white-space:nowrap;">mydata</div><div class="abs" style="left:472.3px;top:4px;white-space:nowrap;">AddPermission20150331</div><div class="abs" style="right:8.2px;top:4px;white-space:nowrap;font-family:'Liberation Mono',monospace;">3</div></div><div class="abs" style="left:0;top:46.0px;width:100%;height:23px;border-bottom:1px solid #d6dfe8;color:#222"><div class="abs" style="left:-12.5px;width:40px;text-align:center;top:4px;color:#8aa0b8">2</div><div class="abs" style="left:30.9px;top:4px;white-space:nowrap;">rdsconnect</div><div class="abs" style="left:472.3px;top:4px;white-space:nowrap;">AddPermission20150331v2</div><div class="abs" style="right:8.2px;top:4px;white-space:nowrap;font-family:'Liberation Mono',monospace;">1</div></div><div class="abs" style="left:0;top:69.0px;width:100%;height:23px;border-bottom:1px solid #d6dfe8;color:#222"><div class="abs" style="left:-12.5px;width:40px;text-align:center;top:4px;color:#8aa0b8">3</div><div class="abs" style="left:30.9px;top:4px;white-space:nowrap;">mydata</div><div class="abs" style="left:472.3px;top:4px;white-space:nowrap;">RemovePermission20150331</div><div class="abs" style="right:8.2px;top:4px;white-space:nowrap;font-family:'Liberation Mono',monospace;">1</div></div><div class="abs" style="left:0;top:92.0px;width:100%;height:23px;border-bottom:1px solid #d6dfe8;color:#222"><div class="abs" style="left:-12.5px;width:40px;text-align:center;top:4px;color:#8aa0b8">4</div><div class="abs" style="left:30.9px;top:4px;white-space:nowrap;">StackSet-SecurityHubAudit-SecurityHubCollectorAwsO-YdRulc6zrlhn</div><div class="abs" style="left:472.3px;top:4px;white-space:nowrap;">AddPermission20150331v2</div><div class="abs" style="right:8.2px;top:4px;white-space:nowrap;font-family:'Liberation Mono',monospace;">1</div></div><div class="abs" style="left:0;top:115.0px;width:100%;height:23px;border-bottom:1px solid #d6dfe8;color:#222"><div class="abs" style="left:-12.5px;width:40px;text-align:center;top:4px;color:#8aa0b8">5</div><div class="abs" style="left:30.9px;top:4px;white-space:nowrap;">StackSet-SecurityHubAudit-SecurityHubCollectorAwsO-FIHUjl4BDflU</div><div class="abs" style="left:472.3px;top:4px;white-space:nowrap;">AddPermission20150331v2</div><div class="abs" style="right:8.2px;top:4px;white-space:nowrap;font-family:'Liberation Mono',monospace;">1</div></div><div class="abs" style="left:0;top:138.0px;width:100%;height:23px;border-bottom:1px solid #d6dfe8;color:#222"><div class="abs" style="left:-12.5px;width:40px;text-align:center;top:4px;color:#8aa0b8">6</div><div class="abs" style="left:30.9px;top:4px;white-space:nowrap;">StackSet-SecurityHubAudit-SecurityHubCollectorAwsO-B0uBOKfOCKfr</div><div class="abs" style="left:472.3px;top:4px;white-space:nowrap;">AddPermission20150331v2</div><div class="abs" style="right:8.2px;top:4px;white-space:nowrap;font-family:'Liberation Mono',monospace;">1</div></div></div></div>
</div></body></html>
